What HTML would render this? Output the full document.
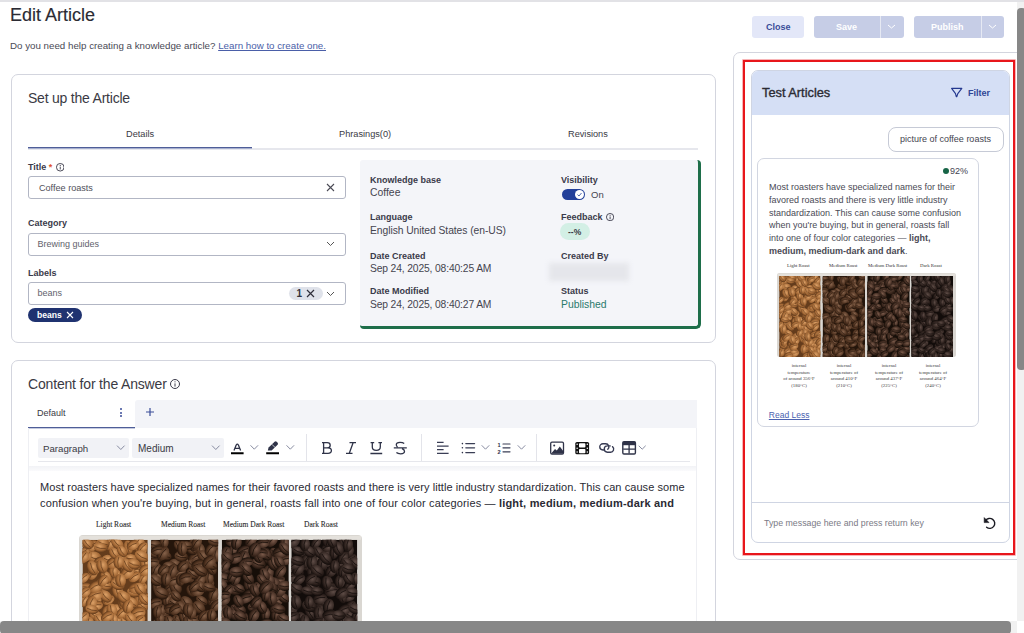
<!DOCTYPE html>
<html><head><meta charset="utf-8">
<style>
*{box-sizing:border-box;margin:0;padding:0}
html,body{width:1024px;height:633px;overflow:hidden;background:#fff;font-family:"Liberation Sans",sans-serif;color:#2f2f3a}
.a{position:absolute}
.t{position:absolute;white-space:nowrap;line-height:1}
.card{position:absolute;border:1px solid #d3d5de;border-radius:7px;background:#fff}
.lbl{font-weight:bold;font-size:9px;color:#3a3a4a}
.inp{position:absolute;border:1px solid #b2b6c4;border-radius:3px;background:#fff}
.btn{position:absolute;border-radius:3px}
</style></head><body>
<svg width="0" height="0" style="position:absolute"><symbol id="beans" viewBox="0 0 179 84"><defs><clipPath id="cp0"><rect x="2.2" y="3" width="41.3" height="81"/></clipPath><radialGradient id="bg0" cx="0.42" cy="0.38" r="0.62"><stop offset="0" stop-color="#dca066"/><stop offset="0.7" stop-color="#a06634"/><stop offset="1" stop-color="#643c1c"/></radialGradient><clipPath id="cp1"><rect x="45.6" y="3" width="42.4" height="81"/></clipPath><radialGradient id="bg1" cx="0.42" cy="0.38" r="0.62"><stop offset="0" stop-color="#86624a"/><stop offset="0.7" stop-color="#4c301e"/><stop offset="1" stop-color="#24150b"/></radialGradient><clipPath id="cp2"><rect x="90.3" y="3" width="42.4" height="81"/></clipPath><radialGradient id="bg2" cx="0.42" cy="0.38" r="0.62"><stop offset="0" stop-color="#7a5a4a"/><stop offset="0.7" stop-color="#3a261c"/><stop offset="1" stop-color="#160e08"/></radialGradient><clipPath id="cp3"><rect x="134.3" y="3" width="41.7" height="81"/></clipPath><radialGradient id="bg3" cx="0.42" cy="0.38" r="0.62"><stop offset="0" stop-color="#5e4c46"/><stop offset="0.7" stop-color="#2c201c"/><stop offset="1" stop-color="#120c0a"/></radialGradient></defs><rect x="0" y="0" width="179" height="84" rx="2.5" fill="#dad7d2"/><rect x="0.6" y="0.6" width="177.8" height="2.4" fill="#e4e1dc"/><g clip-path="url(#cp0)"><rect x="2.2" y="3" width="41.3" height="81" fill="#643c1c"/><g transform="translate(31.5 49.2) rotate(154)"><ellipse rx="4.8" ry="3.5" fill="url(#bg0)"/><path d="M-3.6 0Q0 1.2 3.6 0" fill="none" stroke="#643c1c" stroke-width="0.45"/></g><g transform="translate(21.0 5.0) rotate(146)"><ellipse rx="4.1" ry="3.1" fill="url(#bg0)"/><path d="M-3.1 0Q0 1.1 3.1 0" fill="none" stroke="#643c1c" stroke-width="0.45"/></g><g transform="translate(35.5 46.2) rotate(57)"><ellipse rx="4.8" ry="3.4" fill="url(#bg0)"/><path d="M-3.6 0Q0 1.2 3.6 0" fill="none" stroke="#643c1c" stroke-width="0.45"/></g><g transform="translate(3.7 33.2) rotate(180)"><ellipse rx="4.8" ry="3.3" fill="url(#bg0)"/><path d="M-3.6 0Q0 1.2 3.6 0" fill="none" stroke="#643c1c" stroke-width="0.45"/></g><g transform="translate(39.6 44.1) rotate(43)"><ellipse rx="4.8" ry="3.2" fill="url(#bg0)"/><path d="M-3.6 0Q0 1.1 3.6 0" fill="none" stroke="#643c1c" stroke-width="0.45"/></g><g transform="translate(30.9 57.4) rotate(17)"><ellipse rx="4.6" ry="3.2" fill="url(#bg0)"/><path d="M-3.5 0Q0 1.1 3.5 0" fill="none" stroke="#643c1c" stroke-width="0.45"/></g><g transform="translate(38.8 33.8) rotate(142)"><ellipse rx="4.7" ry="3.4" fill="url(#bg0)"/><path d="M-3.5 0Q0 1.2 3.5 0" fill="none" stroke="#643c1c" stroke-width="0.45"/></g><g transform="translate(8.5 24.7) rotate(123)"><ellipse rx="4.0" ry="2.9" fill="url(#bg0)"/><path d="M-3.0 0Q0 1.0 3.0 0" fill="none" stroke="#643c1c" stroke-width="0.45"/></g><g transform="translate(40.4 27.5) rotate(123)"><ellipse rx="3.9" ry="2.7" fill="url(#bg0)"/><path d="M-2.9 0Q0 0.9 2.9 0" fill="none" stroke="#643c1c" stroke-width="0.45"/></g><g transform="translate(24.4 47.6) rotate(21)"><ellipse rx="4.8" ry="3.7" fill="url(#bg0)"/><path d="M-3.6 0Q0 1.3 3.6 0" fill="none" stroke="#643c1c" stroke-width="0.45"/></g><g transform="translate(38.1 39.8) rotate(91)"><ellipse rx="4.4" ry="3.3" fill="url(#bg0)"/><path d="M-3.3 0Q0 1.2 3.3 0" fill="none" stroke="#643c1c" stroke-width="0.45"/></g><g transform="translate(34.9 36.1) rotate(13)"><ellipse rx="4.6" ry="3.1" fill="url(#bg0)"/><path d="M-3.4 0Q0 1.1 3.4 0" fill="none" stroke="#643c1c" stroke-width="0.45"/></g><g transform="translate(20.8 25.3) rotate(99)"><ellipse rx="4.0" ry="2.7" fill="url(#bg0)"/><path d="M-3.0 0Q0 0.9 3.0 0" fill="none" stroke="#643c1c" stroke-width="0.45"/></g><g transform="translate(10.9 51.1) rotate(26)"><ellipse rx="4.4" ry="3.2" fill="url(#bg0)"/><path d="M-3.3 0Q0 1.1 3.3 0" fill="none" stroke="#643c1c" stroke-width="0.45"/></g><g transform="translate(18.6 41.1) rotate(151)"><ellipse rx="4.1" ry="2.8" fill="url(#bg0)"/><path d="M-3.1 0Q0 1.0 3.1 0" fill="none" stroke="#643c1c" stroke-width="0.45"/></g><g transform="translate(9.6 14.1) rotate(17)"><ellipse rx="4.9" ry="3.8" fill="url(#bg0)"/><path d="M-3.7 0Q0 1.3 3.7 0" fill="none" stroke="#643c1c" stroke-width="0.45"/></g><g transform="translate(14.7 37.3) rotate(83)"><ellipse rx="4.0" ry="3.1" fill="url(#bg0)"/><path d="M-3.0 0Q0 1.1 3.0 0" fill="none" stroke="#643c1c" stroke-width="0.45"/></g><g transform="translate(5.3 78.6) rotate(84)"><ellipse rx="4.7" ry="3.3" fill="url(#bg0)"/><path d="M-3.5 0Q0 1.1 3.5 0" fill="none" stroke="#643c1c" stroke-width="0.45"/></g><g transform="translate(39.6 10.1) rotate(108)"><ellipse rx="4.4" ry="3.1" fill="url(#bg0)"/><path d="M-3.3 0Q0 1.1 3.3 0" fill="none" stroke="#643c1c" stroke-width="0.45"/></g><g transform="translate(42.8 39.7) rotate(152)"><ellipse rx="3.9" ry="2.9" fill="url(#bg0)"/><path d="M-2.9 0Q0 1.0 2.9 0" fill="none" stroke="#643c1c" stroke-width="0.45"/></g><g transform="translate(41.5 73.1) rotate(133)"><ellipse rx="4.1" ry="2.9" fill="url(#bg0)"/><path d="M-3.1 0Q0 1.0 3.1 0" fill="none" stroke="#643c1c" stroke-width="0.45"/></g><g transform="translate(38.8 35.0) rotate(30)"><ellipse rx="4.3" ry="2.9" fill="url(#bg0)"/><path d="M-3.2 0Q0 1.0 3.2 0" fill="none" stroke="#643c1c" stroke-width="0.45"/></g><g transform="translate(37.1 60.9) rotate(161)"><ellipse rx="4.4" ry="2.9" fill="url(#bg0)"/><path d="M-3.3 0Q0 1.0 3.3 0" fill="none" stroke="#643c1c" stroke-width="0.45"/></g><g transform="translate(17.6 80.4) rotate(155)"><ellipse rx="4.7" ry="3.5" fill="url(#bg0)"/><path d="M-3.5 0Q0 1.2 3.5 0" fill="none" stroke="#643c1c" stroke-width="0.45"/></g><g transform="translate(36.8 71.7) rotate(108)"><ellipse rx="4.5" ry="3.2" fill="url(#bg0)"/><path d="M-3.4 0Q0 1.1 3.4 0" fill="none" stroke="#643c1c" stroke-width="0.45"/></g><g transform="translate(8.0 6.8) rotate(145)"><ellipse rx="4.4" ry="3.4" fill="url(#bg0)"/><path d="M-3.3 0Q0 1.2 3.3 0" fill="none" stroke="#643c1c" stroke-width="0.45"/></g><g transform="translate(38.2 6.4) rotate(134)"><ellipse rx="4.2" ry="3.2" fill="url(#bg0)"/><path d="M-3.1 0Q0 1.1 3.1 0" fill="none" stroke="#643c1c" stroke-width="0.45"/></g><g transform="translate(42.2 18.3) rotate(73)"><ellipse rx="4.7" ry="3.5" fill="url(#bg0)"/><path d="M-3.5 0Q0 1.2 3.5 0" fill="none" stroke="#643c1c" stroke-width="0.45"/></g><g transform="translate(31.6 80.0) rotate(125)"><ellipse rx="4.8" ry="3.7" fill="url(#bg0)"/><path d="M-3.6 0Q0 1.3 3.6 0" fill="none" stroke="#643c1c" stroke-width="0.45"/></g><g transform="translate(24.5 35.8) rotate(73)"><ellipse rx="4.7" ry="3.5" fill="url(#bg0)"/><path d="M-3.5 0Q0 1.2 3.5 0" fill="none" stroke="#643c1c" stroke-width="0.45"/></g><g transform="translate(19.3 64.7) rotate(62)"><ellipse rx="4.6" ry="3.1" fill="url(#bg0)"/><path d="M-3.5 0Q0 1.1 3.5 0" fill="none" stroke="#643c1c" stroke-width="0.45"/></g><g transform="translate(28.2 56.1) rotate(64)"><ellipse rx="4.4" ry="2.9" fill="url(#bg0)"/><path d="M-3.3 0Q0 1.0 3.3 0" fill="none" stroke="#643c1c" stroke-width="0.45"/></g><g transform="translate(6.1 57.8) rotate(42)"><ellipse rx="4.5" ry="3.3" fill="url(#bg0)"/><path d="M-3.4 0Q0 1.2 3.4 0" fill="none" stroke="#643c1c" stroke-width="0.45"/></g><g transform="translate(2.6 41.2) rotate(61)"><ellipse rx="4.8" ry="3.6" fill="url(#bg0)"/><path d="M-3.6 0Q0 1.3 3.6 0" fill="none" stroke="#643c1c" stroke-width="0.45"/></g><g transform="translate(28.0 43.0) rotate(96)"><ellipse rx="4.6" ry="3.3" fill="url(#bg0)"/><path d="M-3.4 0Q0 1.2 3.4 0" fill="none" stroke="#643c1c" stroke-width="0.45"/></g><g transform="translate(19.5 5.6) rotate(116)"><ellipse rx="4.3" ry="3.3" fill="url(#bg0)"/><path d="M-3.2 0Q0 1.2 3.2 0" fill="none" stroke="#643c1c" stroke-width="0.45"/></g><g transform="translate(36.1 33.5) rotate(176)"><ellipse rx="4.6" ry="3.5" fill="url(#bg0)"/><path d="M-3.5 0Q0 1.2 3.5 0" fill="none" stroke="#643c1c" stroke-width="0.45"/></g><g transform="translate(10.9 41.7) rotate(133)"><ellipse rx="3.9" ry="2.9" fill="url(#bg0)"/><path d="M-2.9 0Q0 1.0 2.9 0" fill="none" stroke="#643c1c" stroke-width="0.45"/></g><g transform="translate(33.2 14.9) rotate(9)"><ellipse rx="4.2" ry="2.9" fill="url(#bg0)"/><path d="M-3.1 0Q0 1.0 3.1 0" fill="none" stroke="#643c1c" stroke-width="0.45"/></g><g transform="translate(15.2 5.1) rotate(18)"><ellipse rx="4.1" ry="2.9" fill="url(#bg0)"/><path d="M-3.1 0Q0 1.0 3.1 0" fill="none" stroke="#643c1c" stroke-width="0.45"/></g><g transform="translate(11.0 36.5) rotate(99)"><ellipse rx="4.2" ry="3.2" fill="url(#bg0)"/><path d="M-3.1 0Q0 1.1 3.1 0" fill="none" stroke="#643c1c" stroke-width="0.45"/></g><g transform="translate(17.8 49.1) rotate(102)"><ellipse rx="4.4" ry="3.4" fill="url(#bg0)"/><path d="M-3.3 0Q0 1.2 3.3 0" fill="none" stroke="#643c1c" stroke-width="0.45"/></g><g transform="translate(3.7 13.2) rotate(146)"><ellipse rx="4.9" ry="3.6" fill="url(#bg0)"/><path d="M-3.7 0Q0 1.3 3.7 0" fill="none" stroke="#643c1c" stroke-width="0.45"/></g><g transform="translate(3.1 11.0) rotate(137)"><ellipse rx="4.0" ry="2.9" fill="url(#bg0)"/><path d="M-3.0 0Q0 1.0 3.0 0" fill="none" stroke="#643c1c" stroke-width="0.45"/></g><g transform="translate(18.3 17.7) rotate(29)"><ellipse rx="3.9" ry="3.0" fill="url(#bg0)"/><path d="M-3.0 0Q0 1.1 3.0 0" fill="none" stroke="#643c1c" stroke-width="0.45"/></g><g transform="translate(23.8 26.0) rotate(89)"><ellipse rx="4.4" ry="3.0" fill="url(#bg0)"/><path d="M-3.3 0Q0 1.0 3.3 0" fill="none" stroke="#643c1c" stroke-width="0.45"/></g><g transform="translate(36.5 22.2) rotate(170)"><ellipse rx="4.5" ry="3.0" fill="url(#bg0)"/><path d="M-3.4 0Q0 1.1 3.4 0" fill="none" stroke="#643c1c" stroke-width="0.45"/></g><g transform="translate(29.3 22.8) rotate(108)"><ellipse rx="4.3" ry="3.1" fill="url(#bg0)"/><path d="M-3.2 0Q0 1.1 3.2 0" fill="none" stroke="#643c1c" stroke-width="0.45"/></g><g transform="translate(3.0 14.0) rotate(118)"><ellipse rx="4.3" ry="3.0" fill="url(#bg0)"/><path d="M-3.2 0Q0 1.0 3.2 0" fill="none" stroke="#643c1c" stroke-width="0.45"/></g><g transform="translate(13.4 31.0) rotate(129)"><ellipse rx="4.5" ry="3.1" fill="url(#bg0)"/><path d="M-3.3 0Q0 1.1 3.3 0" fill="none" stroke="#643c1c" stroke-width="0.45"/></g><g transform="translate(29.1 19.6) rotate(44)"><ellipse rx="4.2" ry="2.8" fill="url(#bg0)"/><path d="M-3.1 0Q0 1.0 3.1 0" fill="none" stroke="#643c1c" stroke-width="0.45"/></g><g transform="translate(3.1 27.1) rotate(136)"><ellipse rx="3.9" ry="2.7" fill="url(#bg0)"/><path d="M-3.0 0Q0 0.9 3.0 0" fill="none" stroke="#643c1c" stroke-width="0.45"/></g><g transform="translate(40.7 61.5) rotate(135)"><ellipse rx="4.3" ry="3.3" fill="url(#bg0)"/><path d="M-3.2 0Q0 1.2 3.2 0" fill="none" stroke="#643c1c" stroke-width="0.45"/></g><g transform="translate(13.6 16.7) rotate(170)"><ellipse rx="4.0" ry="3.1" fill="url(#bg0)"/><path d="M-3.0 0Q0 1.1 3.0 0" fill="none" stroke="#643c1c" stroke-width="0.45"/></g><g transform="translate(27.5 59.6) rotate(77)"><ellipse rx="4.0" ry="3.1" fill="url(#bg0)"/><path d="M-3.0 0Q0 1.1 3.0 0" fill="none" stroke="#643c1c" stroke-width="0.45"/></g><g transform="translate(6.4 72.3) rotate(44)"><ellipse rx="4.4" ry="3.4" fill="url(#bg0)"/><path d="M-3.3 0Q0 1.2 3.3 0" fill="none" stroke="#643c1c" stroke-width="0.45"/></g><g transform="translate(41.5 65.4) rotate(130)"><ellipse rx="4.4" ry="3.4" fill="url(#bg0)"/><path d="M-3.3 0Q0 1.2 3.3 0" fill="none" stroke="#643c1c" stroke-width="0.45"/></g><g transform="translate(41.8 22.3) rotate(147)"><ellipse rx="4.4" ry="3.4" fill="url(#bg0)"/><path d="M-3.3 0Q0 1.2 3.3 0" fill="none" stroke="#643c1c" stroke-width="0.45"/></g><g transform="translate(7.1 69.1) rotate(112)"><ellipse rx="4.5" ry="3.0" fill="url(#bg0)"/><path d="M-3.4 0Q0 1.1 3.4 0" fill="none" stroke="#643c1c" stroke-width="0.45"/></g><g transform="translate(5.3 5.6) rotate(9)"><ellipse rx="4.4" ry="3.0" fill="url(#bg0)"/><path d="M-3.3 0Q0 1.0 3.3 0" fill="none" stroke="#643c1c" stroke-width="0.45"/></g><g transform="translate(31.1 7.8) rotate(80)"><ellipse rx="4.4" ry="3.0" fill="url(#bg0)"/><path d="M-3.3 0Q0 1.0 3.3 0" fill="none" stroke="#643c1c" stroke-width="0.45"/></g><g transform="translate(16.9 38.7) rotate(47)"><ellipse rx="4.6" ry="3.3" fill="url(#bg0)"/><path d="M-3.4 0Q0 1.1 3.4 0" fill="none" stroke="#643c1c" stroke-width="0.45"/></g><g transform="translate(7.6 39.7) rotate(140)"><ellipse rx="4.5" ry="3.2" fill="url(#bg0)"/><path d="M-3.4 0Q0 1.1 3.4 0" fill="none" stroke="#643c1c" stroke-width="0.45"/></g><g transform="translate(38.5 67.5) rotate(171)"><ellipse rx="4.4" ry="3.5" fill="url(#bg0)"/><path d="M-3.3 0Q0 1.2 3.3 0" fill="none" stroke="#643c1c" stroke-width="0.45"/></g><g transform="translate(26.4 14.8) rotate(20)"><ellipse rx="4.6" ry="3.2" fill="url(#bg0)"/><path d="M-3.5 0Q0 1.1 3.5 0" fill="none" stroke="#643c1c" stroke-width="0.45"/></g><g transform="translate(29.1 41.2) rotate(112)"><ellipse rx="4.8" ry="3.6" fill="url(#bg0)"/><path d="M-3.6 0Q0 1.3 3.6 0" fill="none" stroke="#643c1c" stroke-width="0.45"/></g><g transform="translate(13.0 73.2) rotate(123)"><ellipse rx="4.3" ry="2.9" fill="url(#bg0)"/><path d="M-3.2 0Q0 1.0 3.2 0" fill="none" stroke="#643c1c" stroke-width="0.45"/></g><g transform="translate(37.5 4.5) rotate(114)"><ellipse rx="4.5" ry="3.3" fill="url(#bg0)"/><path d="M-3.3 0Q0 1.1 3.3 0" fill="none" stroke="#643c1c" stroke-width="0.45"/></g><g transform="translate(24.3 5.3) rotate(45)"><ellipse rx="4.7" ry="3.2" fill="url(#bg0)"/><path d="M-3.5 0Q0 1.1 3.5 0" fill="none" stroke="#643c1c" stroke-width="0.45"/></g><g transform="translate(10.4 37.9) rotate(158)"><ellipse rx="4.9" ry="3.8" fill="url(#bg0)"/><path d="M-3.7 0Q0 1.3 3.7 0" fill="none" stroke="#643c1c" stroke-width="0.45"/></g><g transform="translate(5.3 5.5) rotate(49)"><ellipse rx="3.9" ry="2.6" fill="url(#bg0)"/><path d="M-3.0 0Q0 0.9 3.0 0" fill="none" stroke="#643c1c" stroke-width="0.45"/></g><g transform="translate(31.2 51.1) rotate(18)"><ellipse rx="4.3" ry="3.2" fill="url(#bg0)"/><path d="M-3.2 0Q0 1.1 3.2 0" fill="none" stroke="#643c1c" stroke-width="0.45"/></g><g transform="translate(19.0 15.6) rotate(16)"><ellipse rx="4.4" ry="3.0" fill="url(#bg0)"/><path d="M-3.3 0Q0 1.0 3.3 0" fill="none" stroke="#643c1c" stroke-width="0.45"/></g><g transform="translate(15.2 71.0) rotate(114)"><ellipse rx="4.6" ry="3.3" fill="url(#bg0)"/><path d="M-3.4 0Q0 1.2 3.4 0" fill="none" stroke="#643c1c" stroke-width="0.45"/></g><g transform="translate(33.6 42.7) rotate(38)"><ellipse rx="4.3" ry="3.1" fill="url(#bg0)"/><path d="M-3.2 0Q0 1.1 3.2 0" fill="none" stroke="#643c1c" stroke-width="0.45"/></g><g transform="translate(9.4 22.1) rotate(151)"><ellipse rx="4.2" ry="3.2" fill="url(#bg0)"/><path d="M-3.2 0Q0 1.1 3.2 0" fill="none" stroke="#643c1c" stroke-width="0.45"/></g><g transform="translate(28.8 82.4) rotate(146)"><ellipse rx="4.0" ry="2.7" fill="url(#bg0)"/><path d="M-3.0 0Q0 0.9 3.0 0" fill="none" stroke="#643c1c" stroke-width="0.45"/></g><g transform="translate(11.7 60.8) rotate(38)"><ellipse rx="4.5" ry="3.4" fill="url(#bg0)"/><path d="M-3.4 0Q0 1.2 3.4 0" fill="none" stroke="#643c1c" stroke-width="0.45"/></g><g transform="translate(35.0 26.4) rotate(146)"><ellipse rx="4.3" ry="3.0" fill="url(#bg0)"/><path d="M-3.2 0Q0 1.0 3.2 0" fill="none" stroke="#643c1c" stroke-width="0.45"/></g><g transform="translate(16.5 77.7) rotate(178)"><ellipse rx="4.3" ry="3.2" fill="url(#bg0)"/><path d="M-3.2 0Q0 1.1 3.2 0" fill="none" stroke="#643c1c" stroke-width="0.45"/></g><g transform="translate(23.3 53.8) rotate(134)"><ellipse rx="4.2" ry="3.1" fill="url(#bg0)"/><path d="M-3.2 0Q0 1.1 3.2 0" fill="none" stroke="#643c1c" stroke-width="0.45"/></g><g transform="translate(8.7 20.8) rotate(66)"><ellipse rx="4.8" ry="3.4" fill="url(#bg0)"/><path d="M-3.6 0Q0 1.2 3.6 0" fill="none" stroke="#643c1c" stroke-width="0.45"/></g><g transform="translate(17.0 31.9) rotate(14)"><ellipse rx="4.0" ry="3.1" fill="url(#bg0)"/><path d="M-3.0 0Q0 1.1 3.0 0" fill="none" stroke="#643c1c" stroke-width="0.45"/></g><g transform="translate(21.9 23.1) rotate(87)"><ellipse rx="4.0" ry="2.9" fill="url(#bg0)"/><path d="M-3.0 0Q0 1.0 3.0 0" fill="none" stroke="#643c1c" stroke-width="0.45"/></g><g transform="translate(6.9 65.6) rotate(140)"><ellipse rx="4.6" ry="3.2" fill="url(#bg0)"/><path d="M-3.4 0Q0 1.1 3.4 0" fill="none" stroke="#643c1c" stroke-width="0.45"/></g><g transform="translate(3.1 41.6) rotate(119)"><ellipse rx="4.0" ry="2.7" fill="url(#bg0)"/><path d="M-3.0 0Q0 1.0 3.0 0" fill="none" stroke="#643c1c" stroke-width="0.45"/></g><g transform="translate(14.3 69.9) rotate(130)"><ellipse rx="4.0" ry="2.8" fill="url(#bg0)"/><path d="M-3.0 0Q0 1.0 3.0 0" fill="none" stroke="#643c1c" stroke-width="0.45"/></g><g transform="translate(24.5 31.3) rotate(26)"><ellipse rx="4.6" ry="3.2" fill="url(#bg0)"/><path d="M-3.4 0Q0 1.1 3.4 0" fill="none" stroke="#643c1c" stroke-width="0.45"/></g><g transform="translate(17.0 26.7) rotate(66)"><ellipse rx="4.3" ry="3.2" fill="url(#bg0)"/><path d="M-3.2 0Q0 1.1 3.2 0" fill="none" stroke="#643c1c" stroke-width="0.45"/></g><g transform="translate(34.6 72.3) rotate(102)"><ellipse rx="4.0" ry="3.0" fill="url(#bg0)"/><path d="M-3.0 0Q0 1.0 3.0 0" fill="none" stroke="#643c1c" stroke-width="0.45"/></g><g transform="translate(37.4 49.2) rotate(164)"><ellipse rx="4.8" ry="3.7" fill="url(#bg0)"/><path d="M-3.6 0Q0 1.3 3.6 0" fill="none" stroke="#643c1c" stroke-width="0.45"/></g><g transform="translate(38.6 34.1) rotate(55)"><ellipse rx="4.3" ry="3.3" fill="url(#bg0)"/><path d="M-3.3 0Q0 1.1 3.3 0" fill="none" stroke="#643c1c" stroke-width="0.45"/></g><g transform="translate(31.7 17.5) rotate(168)"><ellipse rx="4.2" ry="3.0" fill="url(#bg0)"/><path d="M-3.2 0Q0 1.0 3.2 0" fill="none" stroke="#643c1c" stroke-width="0.45"/></g><g transform="translate(25.2 65.8) rotate(65)"><ellipse rx="4.8" ry="3.3" fill="url(#bg0)"/><path d="M-3.6 0Q0 1.2 3.6 0" fill="none" stroke="#643c1c" stroke-width="0.45"/></g><g transform="translate(40.8 79.0) rotate(71)"><ellipse rx="4.3" ry="3.0" fill="url(#bg0)"/><path d="M-3.2 0Q0 1.1 3.2 0" fill="none" stroke="#643c1c" stroke-width="0.45"/></g><g transform="translate(29.3 74.3) rotate(101)"><ellipse rx="4.3" ry="2.9" fill="url(#bg0)"/><path d="M-3.2 0Q0 1.0 3.2 0" fill="none" stroke="#643c1c" stroke-width="0.45"/></g><g transform="translate(10.2 32.8) rotate(151)"><ellipse rx="4.7" ry="3.4" fill="url(#bg0)"/><path d="M-3.5 0Q0 1.2 3.5 0" fill="none" stroke="#643c1c" stroke-width="0.45"/></g><g transform="translate(38.1 54.2) rotate(137)"><ellipse rx="4.5" ry="3.0" fill="url(#bg0)"/><path d="M-3.3 0Q0 1.1 3.3 0" fill="none" stroke="#643c1c" stroke-width="0.45"/></g><g transform="translate(18.5 67.1) rotate(4)"><ellipse rx="4.8" ry="3.3" fill="url(#bg0)"/><path d="M-3.6 0Q0 1.2 3.6 0" fill="none" stroke="#643c1c" stroke-width="0.45"/></g><g transform="translate(32.8 83.3) rotate(102)"><ellipse rx="4.4" ry="3.2" fill="url(#bg0)"/><path d="M-3.3 0Q0 1.1 3.3 0" fill="none" stroke="#643c1c" stroke-width="0.45"/></g><g transform="translate(30.5 23.8) rotate(145)"><ellipse rx="4.9" ry="3.6" fill="url(#bg0)"/><path d="M-3.6 0Q0 1.3 3.6 0" fill="none" stroke="#643c1c" stroke-width="0.45"/></g><g transform="translate(9.9 78.3) rotate(142)"><ellipse rx="4.0" ry="2.9" fill="url(#bg0)"/><path d="M-3.0 0Q0 1.0 3.0 0" fill="none" stroke="#643c1c" stroke-width="0.45"/></g><g transform="translate(40.2 8.0) rotate(133)"><ellipse rx="4.0" ry="2.7" fill="url(#bg0)"/><path d="M-3.0 0Q0 0.9 3.0 0" fill="none" stroke="#643c1c" stroke-width="0.45"/></g><g transform="translate(35.5 77.1) rotate(114)"><ellipse rx="4.8" ry="3.2" fill="url(#bg0)"/><path d="M-3.6 0Q0 1.1 3.6 0" fill="none" stroke="#643c1c" stroke-width="0.45"/></g><g transform="translate(22.4 59.9) rotate(117)"><ellipse rx="4.0" ry="3.0" fill="url(#bg0)"/><path d="M-3.0 0Q0 1.1 3.0 0" fill="none" stroke="#643c1c" stroke-width="0.45"/></g><g transform="translate(26.9 49.4) rotate(138)"><ellipse rx="4.1" ry="2.8" fill="url(#bg0)"/><path d="M-3.1 0Q0 1.0 3.1 0" fill="none" stroke="#643c1c" stroke-width="0.45"/></g><g transform="translate(20.9 47.5) rotate(71)"><ellipse rx="4.4" ry="3.3" fill="url(#bg0)"/><path d="M-3.3 0Q0 1.2 3.3 0" fill="none" stroke="#643c1c" stroke-width="0.45"/></g><g transform="translate(32.7 69.4) rotate(121)"><ellipse rx="4.2" ry="3.3" fill="url(#bg0)"/><path d="M-3.2 0Q0 1.2 3.2 0" fill="none" stroke="#643c1c" stroke-width="0.45"/></g><g transform="translate(18.5 69.0) rotate(130)"><ellipse rx="4.4" ry="3.2" fill="url(#bg0)"/><path d="M-3.3 0Q0 1.1 3.3 0" fill="none" stroke="#643c1c" stroke-width="0.45"/></g><g transform="translate(35.5 80.6) rotate(74)"><ellipse rx="4.6" ry="3.5" fill="url(#bg0)"/><path d="M-3.5 0Q0 1.2 3.5 0" fill="none" stroke="#643c1c" stroke-width="0.45"/></g><g transform="translate(21.8 17.5) rotate(154)"><ellipse rx="4.7" ry="3.5" fill="url(#bg0)"/><path d="M-3.5 0Q0 1.2 3.5 0" fill="none" stroke="#643c1c" stroke-width="0.45"/></g><g transform="translate(16.8 73.3) rotate(160)"><ellipse rx="4.7" ry="3.6" fill="url(#bg0)"/><path d="M-3.5 0Q0 1.3 3.5 0" fill="none" stroke="#643c1c" stroke-width="0.45"/></g><g transform="translate(6.0 56.2) rotate(94)"><ellipse rx="4.9" ry="3.6" fill="url(#bg0)"/><path d="M-3.6 0Q0 1.3 3.6 0" fill="none" stroke="#643c1c" stroke-width="0.45"/></g><g transform="translate(14.6 19.6) rotate(76)"><ellipse rx="4.6" ry="3.5" fill="url(#bg0)"/><path d="M-3.5 0Q0 1.2 3.5 0" fill="none" stroke="#643c1c" stroke-width="0.45"/></g><g transform="translate(2.8 52.1) rotate(133)"><ellipse rx="4.3" ry="2.9" fill="url(#bg0)"/><path d="M-3.2 0Q0 1.0 3.2 0" fill="none" stroke="#643c1c" stroke-width="0.45"/></g><g transform="translate(39.8 13.4) rotate(30)"><ellipse rx="4.9" ry="3.4" fill="url(#bg0)"/><path d="M-3.7 0Q0 1.2 3.7 0" fill="none" stroke="#643c1c" stroke-width="0.45"/></g><g transform="translate(34.4 77.2) rotate(53)"><ellipse rx="4.1" ry="2.9" fill="url(#bg0)"/><path d="M-3.1 0Q0 1.0 3.1 0" fill="none" stroke="#643c1c" stroke-width="0.45"/></g><g transform="translate(30.5 19.1) rotate(56)"><ellipse rx="4.9" ry="3.2" fill="url(#bg0)"/><path d="M-3.7 0Q0 1.1 3.7 0" fill="none" stroke="#643c1c" stroke-width="0.45"/></g><g transform="translate(3.8 36.3) rotate(140)"><ellipse rx="4.0" ry="3.0" fill="url(#bg0)"/><path d="M-3.0 0Q0 1.0 3.0 0" fill="none" stroke="#643c1c" stroke-width="0.45"/></g><g transform="translate(22.0 53.6) rotate(83)"><ellipse rx="4.1" ry="2.7" fill="url(#bg0)"/><path d="M-3.1 0Q0 1.0 3.1 0" fill="none" stroke="#643c1c" stroke-width="0.45"/></g><g transform="translate(28.0 76.7) rotate(7)"><ellipse rx="4.5" ry="3.4" fill="url(#bg0)"/><path d="M-3.4 0Q0 1.2 3.4 0" fill="none" stroke="#643c1c" stroke-width="0.45"/></g><g transform="translate(27.6 64.3) rotate(39)"><ellipse rx="4.0" ry="2.7" fill="url(#bg0)"/><path d="M-3.0 0Q0 1.0 3.0 0" fill="none" stroke="#643c1c" stroke-width="0.45"/></g><g transform="translate(4.1 79.8) rotate(107)"><ellipse rx="4.1" ry="3.1" fill="url(#bg0)"/><path d="M-3.1 0Q0 1.1 3.1 0" fill="none" stroke="#643c1c" stroke-width="0.45"/></g><g transform="translate(41.2 40.6) rotate(51)"><ellipse rx="4.1" ry="2.8" fill="url(#bg0)"/><path d="M-3.1 0Q0 1.0 3.1 0" fill="none" stroke="#643c1c" stroke-width="0.45"/></g><g transform="translate(22.4 11.6) rotate(56)"><ellipse rx="4.1" ry="3.1" fill="url(#bg0)"/><path d="M-3.1 0Q0 1.1 3.1 0" fill="none" stroke="#643c1c" stroke-width="0.45"/></g><g transform="translate(26.3 28.6) rotate(86)"><ellipse rx="4.4" ry="3.4" fill="url(#bg0)"/><path d="M-3.3 0Q0 1.2 3.3 0" fill="none" stroke="#643c1c" stroke-width="0.45"/></g><g transform="translate(11.3 82.5) rotate(165)"><ellipse rx="4.2" ry="3.2" fill="url(#bg0)"/><path d="M-3.1 0Q0 1.1 3.1 0" fill="none" stroke="#643c1c" stroke-width="0.45"/></g><g transform="translate(11.0 44.5) rotate(172)"><ellipse rx="4.2" ry="3.1" fill="url(#bg0)"/><path d="M-3.2 0Q0 1.1 3.2 0" fill="none" stroke="#643c1c" stroke-width="0.45"/></g><g transform="translate(13.7 7.9) rotate(9)"><ellipse rx="4.4" ry="3.0" fill="url(#bg0)"/><path d="M-3.3 0Q0 1.1 3.3 0" fill="none" stroke="#643c1c" stroke-width="0.45"/></g><g transform="translate(15.0 67.1) rotate(69)"><ellipse rx="4.8" ry="3.7" fill="url(#bg0)"/><path d="M-3.6 0Q0 1.3 3.6 0" fill="none" stroke="#643c1c" stroke-width="0.45"/></g><g transform="translate(32.8 53.0) rotate(49)"><ellipse rx="4.4" ry="3.2" fill="url(#bg0)"/><path d="M-3.3 0Q0 1.1 3.3 0" fill="none" stroke="#643c1c" stroke-width="0.45"/></g><g transform="translate(39.0 82.4) rotate(43)"><ellipse rx="4.9" ry="3.6" fill="url(#bg0)"/><path d="M-3.7 0Q0 1.3 3.7 0" fill="none" stroke="#643c1c" stroke-width="0.45"/></g><g transform="translate(28.8 69.8) rotate(67)"><ellipse rx="3.9" ry="2.8" fill="url(#bg0)"/><path d="M-2.9 0Q0 1.0 2.9 0" fill="none" stroke="#643c1c" stroke-width="0.45"/></g><g transform="translate(7.8 43.2) rotate(109)"><ellipse rx="4.7" ry="3.5" fill="url(#bg0)"/><path d="M-3.5 0Q0 1.2 3.5 0" fill="none" stroke="#643c1c" stroke-width="0.45"/></g><g transform="translate(27.2 10.2) rotate(58)"><ellipse rx="4.1" ry="2.8" fill="url(#bg0)"/><path d="M-3.0 0Q0 1.0 3.0 0" fill="none" stroke="#643c1c" stroke-width="0.45"/></g><g transform="translate(25.0 17.0) rotate(93)"><ellipse rx="4.2" ry="3.2" fill="url(#bg0)"/><path d="M-3.1 0Q0 1.1 3.1 0" fill="none" stroke="#643c1c" stroke-width="0.45"/></g><g transform="translate(28.2 39.2) rotate(48)"><ellipse rx="4.5" ry="3.5" fill="url(#bg0)"/><path d="M-3.4 0Q0 1.2 3.4 0" fill="none" stroke="#643c1c" stroke-width="0.45"/></g><g transform="translate(42.3 68.5) rotate(139)"><ellipse rx="4.4" ry="3.0" fill="url(#bg0)"/><path d="M-3.3 0Q0 1.1 3.3 0" fill="none" stroke="#643c1c" stroke-width="0.45"/></g><g transform="translate(34.0 6.4) rotate(152)"><ellipse rx="3.9" ry="3.0" fill="url(#bg0)"/><path d="M-2.9 0Q0 1.0 2.9 0" fill="none" stroke="#643c1c" stroke-width="0.45"/></g><g transform="translate(13.2 53.9) rotate(49)"><ellipse rx="4.7" ry="3.2" fill="url(#bg0)"/><path d="M-3.5 0Q0 1.1 3.5 0" fill="none" stroke="#643c1c" stroke-width="0.45"/></g><g transform="translate(30.5 63.9) rotate(86)"><ellipse rx="4.6" ry="3.1" fill="url(#bg0)"/><path d="M-3.5 0Q0 1.1 3.5 0" fill="none" stroke="#643c1c" stroke-width="0.45"/></g><g transform="translate(31.0 45.2) rotate(106)"><ellipse rx="4.4" ry="3.4" fill="url(#bg0)"/><path d="M-3.3 0Q0 1.2 3.3 0" fill="none" stroke="#643c1c" stroke-width="0.45"/></g><g transform="translate(9.6 64.3) rotate(142)"><ellipse rx="4.8" ry="3.3" fill="url(#bg0)"/><path d="M-3.6 0Q0 1.2 3.6 0" fill="none" stroke="#643c1c" stroke-width="0.45"/></g><g transform="translate(34.8 18.3) rotate(16)"><ellipse rx="4.3" ry="3.3" fill="url(#bg0)"/><path d="M-3.2 0Q0 1.2 3.2 0" fill="none" stroke="#643c1c" stroke-width="0.45"/></g><g transform="translate(26.2 76.2) rotate(98)"><ellipse rx="4.7" ry="3.2" fill="url(#bg0)"/><path d="M-3.5 0Q0 1.1 3.5 0" fill="none" stroke="#643c1c" stroke-width="0.45"/></g><g transform="translate(17.9 51.6) rotate(150)"><ellipse rx="4.4" ry="3.0" fill="url(#bg0)"/><path d="M-3.3 0Q0 1.1 3.3 0" fill="none" stroke="#643c1c" stroke-width="0.45"/></g><g transform="translate(8.2 47.0) rotate(14)"><ellipse rx="4.2" ry="2.9" fill="url(#bg0)"/><path d="M-3.2 0Q0 1.0 3.2 0" fill="none" stroke="#643c1c" stroke-width="0.45"/></g><g transform="translate(15.4 28.8) rotate(129)"><ellipse rx="4.2" ry="3.0" fill="url(#bg0)"/><path d="M-3.2 0Q0 1.1 3.2 0" fill="none" stroke="#643c1c" stroke-width="0.45"/></g></g><g clip-path="url(#cp1)"><rect x="45.6" y="3" width="42.4" height="81" fill="#24150b"/><g transform="translate(57.6 38.1) rotate(137)"><ellipse rx="4.3" ry="3.1" fill="url(#bg1)"/><path d="M-3.2 0Q0 1.1 3.2 0" fill="none" stroke="#24150b" stroke-width="0.45"/></g><g transform="translate(71.0 26.0) rotate(113)"><ellipse rx="4.4" ry="3.1" fill="url(#bg1)"/><path d="M-3.3 0Q0 1.1 3.3 0" fill="none" stroke="#24150b" stroke-width="0.45"/></g><g transform="translate(61.0 54.3) rotate(97)"><ellipse rx="4.1" ry="2.9" fill="url(#bg1)"/><path d="M-3.1 0Q0 1.0 3.1 0" fill="none" stroke="#24150b" stroke-width="0.45"/></g><g transform="translate(65.6 16.9) rotate(50)"><ellipse rx="4.3" ry="2.9" fill="url(#bg1)"/><path d="M-3.2 0Q0 1.0 3.2 0" fill="none" stroke="#24150b" stroke-width="0.45"/></g><g transform="translate(86.5 12.6) rotate(93)"><ellipse rx="4.8" ry="3.6" fill="url(#bg1)"/><path d="M-3.6 0Q0 1.2 3.6 0" fill="none" stroke="#24150b" stroke-width="0.45"/></g><g transform="translate(48.0 66.4) rotate(102)"><ellipse rx="4.6" ry="3.3" fill="url(#bg1)"/><path d="M-3.5 0Q0 1.2 3.5 0" fill="none" stroke="#24150b" stroke-width="0.45"/></g><g transform="translate(77.5 53.8) rotate(19)"><ellipse rx="4.5" ry="3.1" fill="url(#bg1)"/><path d="M-3.4 0Q0 1.1 3.4 0" fill="none" stroke="#24150b" stroke-width="0.45"/></g><g transform="translate(87.1 74.6) rotate(140)"><ellipse rx="4.0" ry="3.0" fill="url(#bg1)"/><path d="M-3.0 0Q0 1.0 3.0 0" fill="none" stroke="#24150b" stroke-width="0.45"/></g><g transform="translate(76.4 28.4) rotate(151)"><ellipse rx="4.0" ry="2.8" fill="url(#bg1)"/><path d="M-3.0 0Q0 1.0 3.0 0" fill="none" stroke="#24150b" stroke-width="0.45"/></g><g transform="translate(50.2 78.7) rotate(151)"><ellipse rx="4.0" ry="3.1" fill="url(#bg1)"/><path d="M-3.0 0Q0 1.1 3.0 0" fill="none" stroke="#24150b" stroke-width="0.45"/></g><g transform="translate(49.3 26.1) rotate(69)"><ellipse rx="4.3" ry="3.3" fill="url(#bg1)"/><path d="M-3.3 0Q0 1.2 3.3 0" fill="none" stroke="#24150b" stroke-width="0.45"/></g><g transform="translate(48.5 21.5) rotate(120)"><ellipse rx="4.2" ry="3.2" fill="url(#bg1)"/><path d="M-3.1 0Q0 1.1 3.1 0" fill="none" stroke="#24150b" stroke-width="0.45"/></g><g transform="translate(58.7 43.4) rotate(88)"><ellipse rx="4.2" ry="3.1" fill="url(#bg1)"/><path d="M-3.2 0Q0 1.1 3.2 0" fill="none" stroke="#24150b" stroke-width="0.45"/></g><g transform="translate(54.7 13.0) rotate(23)"><ellipse rx="4.1" ry="2.9" fill="url(#bg1)"/><path d="M-3.1 0Q0 1.0 3.1 0" fill="none" stroke="#24150b" stroke-width="0.45"/></g><g transform="translate(49.2 33.4) rotate(86)"><ellipse rx="4.1" ry="2.9" fill="url(#bg1)"/><path d="M-3.1 0Q0 1.0 3.1 0" fill="none" stroke="#24150b" stroke-width="0.45"/></g><g transform="translate(49.0 65.8) rotate(99)"><ellipse rx="4.6" ry="3.3" fill="url(#bg1)"/><path d="M-3.4 0Q0 1.2 3.4 0" fill="none" stroke="#24150b" stroke-width="0.45"/></g><g transform="translate(55.3 27.4) rotate(68)"><ellipse rx="4.2" ry="3.0" fill="url(#bg1)"/><path d="M-3.2 0Q0 1.1 3.2 0" fill="none" stroke="#24150b" stroke-width="0.45"/></g><g transform="translate(70.8 78.9) rotate(96)"><ellipse rx="4.8" ry="3.6" fill="url(#bg1)"/><path d="M-3.6 0Q0 1.3 3.6 0" fill="none" stroke="#24150b" stroke-width="0.45"/></g><g transform="translate(55.3 41.1) rotate(93)"><ellipse rx="4.3" ry="2.9" fill="url(#bg1)"/><path d="M-3.3 0Q0 1.0 3.3 0" fill="none" stroke="#24150b" stroke-width="0.45"/></g><g transform="translate(82.9 83.6) rotate(67)"><ellipse rx="4.3" ry="2.9" fill="url(#bg1)"/><path d="M-3.2 0Q0 1.0 3.2 0" fill="none" stroke="#24150b" stroke-width="0.45"/></g><g transform="translate(58.3 32.7) rotate(153)"><ellipse rx="4.5" ry="3.1" fill="url(#bg1)"/><path d="M-3.4 0Q0 1.1 3.4 0" fill="none" stroke="#24150b" stroke-width="0.45"/></g><g transform="translate(48.4 14.9) rotate(2)"><ellipse rx="4.6" ry="3.3" fill="url(#bg1)"/><path d="M-3.5 0Q0 1.2 3.5 0" fill="none" stroke="#24150b" stroke-width="0.45"/></g><g transform="translate(66.8 17.6) rotate(119)"><ellipse rx="4.7" ry="3.5" fill="url(#bg1)"/><path d="M-3.5 0Q0 1.2 3.5 0" fill="none" stroke="#24150b" stroke-width="0.45"/></g><g transform="translate(53.7 4.8) rotate(100)"><ellipse rx="4.0" ry="3.0" fill="url(#bg1)"/><path d="M-3.0 0Q0 1.1 3.0 0" fill="none" stroke="#24150b" stroke-width="0.45"/></g><g transform="translate(49.2 72.3) rotate(139)"><ellipse rx="4.3" ry="2.9" fill="url(#bg1)"/><path d="M-3.2 0Q0 1.0 3.2 0" fill="none" stroke="#24150b" stroke-width="0.45"/></g><g transform="translate(56.2 68.1) rotate(47)"><ellipse rx="4.3" ry="3.2" fill="url(#bg1)"/><path d="M-3.2 0Q0 1.1 3.2 0" fill="none" stroke="#24150b" stroke-width="0.45"/></g><g transform="translate(76.6 9.9) rotate(89)"><ellipse rx="4.7" ry="3.2" fill="url(#bg1)"/><path d="M-3.5 0Q0 1.1 3.5 0" fill="none" stroke="#24150b" stroke-width="0.45"/></g><g transform="translate(53.2 49.0) rotate(51)"><ellipse rx="4.4" ry="3.4" fill="url(#bg1)"/><path d="M-3.3 0Q0 1.2 3.3 0" fill="none" stroke="#24150b" stroke-width="0.45"/></g><g transform="translate(62.7 63.5) rotate(167)"><ellipse rx="4.6" ry="3.2" fill="url(#bg1)"/><path d="M-3.5 0Q0 1.1 3.5 0" fill="none" stroke="#24150b" stroke-width="0.45"/></g><g transform="translate(71.1 35.5) rotate(63)"><ellipse rx="4.1" ry="3.1" fill="url(#bg1)"/><path d="M-3.1 0Q0 1.1 3.1 0" fill="none" stroke="#24150b" stroke-width="0.45"/></g><g transform="translate(61.9 78.3) rotate(134)"><ellipse rx="4.6" ry="3.3" fill="url(#bg1)"/><path d="M-3.5 0Q0 1.2 3.5 0" fill="none" stroke="#24150b" stroke-width="0.45"/></g><g transform="translate(78.0 66.5) rotate(86)"><ellipse rx="4.8" ry="3.6" fill="url(#bg1)"/><path d="M-3.6 0Q0 1.3 3.6 0" fill="none" stroke="#24150b" stroke-width="0.45"/></g><g transform="translate(76.7 81.2) rotate(56)"><ellipse rx="4.2" ry="3.2" fill="url(#bg1)"/><path d="M-3.1 0Q0 1.1 3.1 0" fill="none" stroke="#24150b" stroke-width="0.45"/></g><g transform="translate(60.9 43.2) rotate(22)"><ellipse rx="4.8" ry="3.7" fill="url(#bg1)"/><path d="M-3.6 0Q0 1.3 3.6 0" fill="none" stroke="#24150b" stroke-width="0.45"/></g><g transform="translate(68.0 42.9) rotate(49)"><ellipse rx="4.8" ry="3.7" fill="url(#bg1)"/><path d="M-3.6 0Q0 1.3 3.6 0" fill="none" stroke="#24150b" stroke-width="0.45"/></g><g transform="translate(84.9 54.1) rotate(54)"><ellipse rx="4.3" ry="3.3" fill="url(#bg1)"/><path d="M-3.2 0Q0 1.1 3.2 0" fill="none" stroke="#24150b" stroke-width="0.45"/></g><g transform="translate(85.0 79.9) rotate(13)"><ellipse rx="4.6" ry="3.5" fill="url(#bg1)"/><path d="M-3.5 0Q0 1.2 3.5 0" fill="none" stroke="#24150b" stroke-width="0.45"/></g><g transform="translate(75.8 13.9) rotate(67)"><ellipse rx="3.9" ry="2.8" fill="url(#bg1)"/><path d="M-3.0 0Q0 1.0 3.0 0" fill="none" stroke="#24150b" stroke-width="0.45"/></g><g transform="translate(74.8 78.4) rotate(160)"><ellipse rx="4.2" ry="3.2" fill="url(#bg1)"/><path d="M-3.1 0Q0 1.1 3.1 0" fill="none" stroke="#24150b" stroke-width="0.45"/></g><g transform="translate(82.1 68.0) rotate(61)"><ellipse rx="4.5" ry="3.2" fill="url(#bg1)"/><path d="M-3.4 0Q0 1.1 3.4 0" fill="none" stroke="#24150b" stroke-width="0.45"/></g><g transform="translate(84.9 40.3) rotate(127)"><ellipse rx="4.8" ry="3.2" fill="url(#bg1)"/><path d="M-3.6 0Q0 1.1 3.6 0" fill="none" stroke="#24150b" stroke-width="0.45"/></g><g transform="translate(57.4 47.4) rotate(9)"><ellipse rx="4.1" ry="2.8" fill="url(#bg1)"/><path d="M-3.1 0Q0 1.0 3.1 0" fill="none" stroke="#24150b" stroke-width="0.45"/></g><g transform="translate(83.1 50.8) rotate(11)"><ellipse rx="4.4" ry="3.3" fill="url(#bg1)"/><path d="M-3.3 0Q0 1.1 3.3 0" fill="none" stroke="#24150b" stroke-width="0.45"/></g><g transform="translate(69.1 72.3) rotate(81)"><ellipse rx="4.0" ry="2.8" fill="url(#bg1)"/><path d="M-3.0 0Q0 1.0 3.0 0" fill="none" stroke="#24150b" stroke-width="0.45"/></g><g transform="translate(81.1 31.7) rotate(145)"><ellipse rx="4.9" ry="3.4" fill="url(#bg1)"/><path d="M-3.6 0Q0 1.2 3.6 0" fill="none" stroke="#24150b" stroke-width="0.45"/></g><g transform="translate(82.0 27.3) rotate(89)"><ellipse rx="4.6" ry="3.2" fill="url(#bg1)"/><path d="M-3.4 0Q0 1.1 3.4 0" fill="none" stroke="#24150b" stroke-width="0.45"/></g><g transform="translate(64.5 9.4) rotate(109)"><ellipse rx="4.4" ry="2.9" fill="url(#bg1)"/><path d="M-3.3 0Q0 1.0 3.3 0" fill="none" stroke="#24150b" stroke-width="0.45"/></g><g transform="translate(57.6 69.9) rotate(40)"><ellipse rx="4.2" ry="2.9" fill="url(#bg1)"/><path d="M-3.1 0Q0 1.0 3.1 0" fill="none" stroke="#24150b" stroke-width="0.45"/></g><g transform="translate(61.5 78.2) rotate(176)"><ellipse rx="4.4" ry="3.4" fill="url(#bg1)"/><path d="M-3.3 0Q0 1.2 3.3 0" fill="none" stroke="#24150b" stroke-width="0.45"/></g><g transform="translate(46.9 75.8) rotate(153)"><ellipse rx="3.9" ry="2.8" fill="url(#bg1)"/><path d="M-2.9 0Q0 1.0 2.9 0" fill="none" stroke="#24150b" stroke-width="0.45"/></g><g transform="translate(63.3 23.8) rotate(148)"><ellipse rx="4.7" ry="3.1" fill="url(#bg1)"/><path d="M-3.5 0Q0 1.1 3.5 0" fill="none" stroke="#24150b" stroke-width="0.45"/></g><g transform="translate(73.2 14.5) rotate(143)"><ellipse rx="4.8" ry="3.6" fill="url(#bg1)"/><path d="M-3.6 0Q0 1.2 3.6 0" fill="none" stroke="#24150b" stroke-width="0.45"/></g><g transform="translate(48.2 6.0) rotate(3)"><ellipse rx="4.2" ry="2.8" fill="url(#bg1)"/><path d="M-3.1 0Q0 1.0 3.1 0" fill="none" stroke="#24150b" stroke-width="0.45"/></g><g transform="translate(54.2 54.2) rotate(71)"><ellipse rx="4.7" ry="3.2" fill="url(#bg1)"/><path d="M-3.5 0Q0 1.1 3.5 0" fill="none" stroke="#24150b" stroke-width="0.45"/></g><g transform="translate(47.7 11.6) rotate(29)"><ellipse rx="4.1" ry="2.8" fill="url(#bg1)"/><path d="M-3.0 0Q0 1.0 3.0 0" fill="none" stroke="#24150b" stroke-width="0.45"/></g><g transform="translate(84.0 65.4) rotate(145)"><ellipse rx="4.2" ry="3.1" fill="url(#bg1)"/><path d="M-3.2 0Q0 1.1 3.2 0" fill="none" stroke="#24150b" stroke-width="0.45"/></g><g transform="translate(83.9 21.3) rotate(66)"><ellipse rx="4.2" ry="3.0" fill="url(#bg1)"/><path d="M-3.1 0Q0 1.0 3.1 0" fill="none" stroke="#24150b" stroke-width="0.45"/></g><g transform="translate(85.0 37.5) rotate(116)"><ellipse rx="4.6" ry="3.3" fill="url(#bg1)"/><path d="M-3.4 0Q0 1.2 3.4 0" fill="none" stroke="#24150b" stroke-width="0.45"/></g><g transform="translate(82.1 77.4) rotate(165)"><ellipse rx="4.3" ry="3.2" fill="url(#bg1)"/><path d="M-3.2 0Q0 1.1 3.2 0" fill="none" stroke="#24150b" stroke-width="0.45"/></g><g transform="translate(65.2 63.8) rotate(178)"><ellipse rx="4.6" ry="3.5" fill="url(#bg1)"/><path d="M-3.5 0Q0 1.2 3.5 0" fill="none" stroke="#24150b" stroke-width="0.45"/></g><g transform="translate(61.1 33.3) rotate(56)"><ellipse rx="4.7" ry="3.6" fill="url(#bg1)"/><path d="M-3.5 0Q0 1.3 3.5 0" fill="none" stroke="#24150b" stroke-width="0.45"/></g><g transform="translate(76.4 28.4) rotate(122)"><ellipse rx="4.7" ry="3.4" fill="url(#bg1)"/><path d="M-3.6 0Q0 1.2 3.6 0" fill="none" stroke="#24150b" stroke-width="0.45"/></g><g transform="translate(53.7 74.3) rotate(74)"><ellipse rx="3.9" ry="2.9" fill="url(#bg1)"/><path d="M-3.0 0Q0 1.0 3.0 0" fill="none" stroke="#24150b" stroke-width="0.45"/></g><g transform="translate(66.4 52.0) rotate(72)"><ellipse rx="4.4" ry="3.1" fill="url(#bg1)"/><path d="M-3.3 0Q0 1.1 3.3 0" fill="none" stroke="#24150b" stroke-width="0.45"/></g><g transform="translate(78.8 13.6) rotate(46)"><ellipse rx="4.6" ry="3.4" fill="url(#bg1)"/><path d="M-3.5 0Q0 1.2 3.5 0" fill="none" stroke="#24150b" stroke-width="0.45"/></g><g transform="translate(71.9 67.5) rotate(123)"><ellipse rx="4.5" ry="3.2" fill="url(#bg1)"/><path d="M-3.4 0Q0 1.1 3.4 0" fill="none" stroke="#24150b" stroke-width="0.45"/></g><g transform="translate(72.0 24.6) rotate(37)"><ellipse rx="4.1" ry="3.1" fill="url(#bg1)"/><path d="M-3.1 0Q0 1.1 3.1 0" fill="none" stroke="#24150b" stroke-width="0.45"/></g><g transform="translate(74.7 35.7) rotate(177)"><ellipse rx="4.5" ry="3.0" fill="url(#bg1)"/><path d="M-3.3 0Q0 1.1 3.3 0" fill="none" stroke="#24150b" stroke-width="0.45"/></g><g transform="translate(86.6 44.5) rotate(133)"><ellipse rx="4.5" ry="3.1" fill="url(#bg1)"/><path d="M-3.4 0Q0 1.1 3.4 0" fill="none" stroke="#24150b" stroke-width="0.45"/></g><g transform="translate(77.7 41.5) rotate(36)"><ellipse rx="4.2" ry="2.8" fill="url(#bg1)"/><path d="M-3.1 0Q0 1.0 3.1 0" fill="none" stroke="#24150b" stroke-width="0.45"/></g><g transform="translate(64.7 68.6) rotate(117)"><ellipse rx="4.5" ry="3.1" fill="url(#bg1)"/><path d="M-3.4 0Q0 1.1 3.4 0" fill="none" stroke="#24150b" stroke-width="0.45"/></g><g transform="translate(53.1 11.7) rotate(125)"><ellipse rx="4.9" ry="3.5" fill="url(#bg1)"/><path d="M-3.7 0Q0 1.2 3.7 0" fill="none" stroke="#24150b" stroke-width="0.45"/></g><g transform="translate(75.8 46.0) rotate(48)"><ellipse rx="4.7" ry="3.6" fill="url(#bg1)"/><path d="M-3.5 0Q0 1.3 3.5 0" fill="none" stroke="#24150b" stroke-width="0.45"/></g><g transform="translate(55.7 78.5) rotate(120)"><ellipse rx="4.2" ry="2.9" fill="url(#bg1)"/><path d="M-3.1 0Q0 1.0 3.1 0" fill="none" stroke="#24150b" stroke-width="0.45"/></g><g transform="translate(61.2 18.4) rotate(25)"><ellipse rx="4.3" ry="3.2" fill="url(#bg1)"/><path d="M-3.2 0Q0 1.1 3.2 0" fill="none" stroke="#24150b" stroke-width="0.45"/></g><g transform="translate(59.3 28.9) rotate(157)"><ellipse rx="4.1" ry="3.2" fill="url(#bg1)"/><path d="M-3.0 0Q0 1.1 3.0 0" fill="none" stroke="#24150b" stroke-width="0.45"/></g><g transform="translate(64.3 28.2) rotate(97)"><ellipse rx="4.1" ry="2.9" fill="url(#bg1)"/><path d="M-3.1 0Q0 1.0 3.1 0" fill="none" stroke="#24150b" stroke-width="0.45"/></g><g transform="translate(48.0 43.0) rotate(163)"><ellipse rx="4.7" ry="3.3" fill="url(#bg1)"/><path d="M-3.5 0Q0 1.2 3.5 0" fill="none" stroke="#24150b" stroke-width="0.45"/></g><g transform="translate(72.5 19.1) rotate(31)"><ellipse rx="4.7" ry="3.6" fill="url(#bg1)"/><path d="M-3.5 0Q0 1.3 3.5 0" fill="none" stroke="#24150b" stroke-width="0.45"/></g><g transform="translate(87.5 5.7) rotate(157)"><ellipse rx="4.0" ry="2.8" fill="url(#bg1)"/><path d="M-3.0 0Q0 1.0 3.0 0" fill="none" stroke="#24150b" stroke-width="0.45"/></g><g transform="translate(83.2 9.1) rotate(130)"><ellipse rx="4.5" ry="3.1" fill="url(#bg1)"/><path d="M-3.4 0Q0 1.1 3.4 0" fill="none" stroke="#24150b" stroke-width="0.45"/></g><g transform="translate(85.2 82.2) rotate(104)"><ellipse rx="4.3" ry="2.9" fill="url(#bg1)"/><path d="M-3.2 0Q0 1.0 3.2 0" fill="none" stroke="#24150b" stroke-width="0.45"/></g><g transform="translate(70.1 58.9) rotate(51)"><ellipse rx="4.6" ry="3.1" fill="url(#bg1)"/><path d="M-3.4 0Q0 1.1 3.4 0" fill="none" stroke="#24150b" stroke-width="0.45"/></g><g transform="translate(62.2 80.0) rotate(150)"><ellipse rx="4.8" ry="3.4" fill="url(#bg1)"/><path d="M-3.6 0Q0 1.2 3.6 0" fill="none" stroke="#24150b" stroke-width="0.45"/></g><g transform="translate(54.3 54.6) rotate(158)"><ellipse rx="4.5" ry="3.4" fill="url(#bg1)"/><path d="M-3.3 0Q0 1.2 3.3 0" fill="none" stroke="#24150b" stroke-width="0.45"/></g><g transform="translate(75.7 71.0) rotate(159)"><ellipse rx="4.3" ry="2.9" fill="url(#bg1)"/><path d="M-3.2 0Q0 1.0 3.2 0" fill="none" stroke="#24150b" stroke-width="0.45"/></g><g transform="translate(76.5 32.3) rotate(49)"><ellipse rx="4.2" ry="3.0" fill="url(#bg1)"/><path d="M-3.1 0Q0 1.1 3.1 0" fill="none" stroke="#24150b" stroke-width="0.45"/></g><g transform="translate(85.8 4.2) rotate(15)"><ellipse rx="4.3" ry="3.0" fill="url(#bg1)"/><path d="M-3.2 0Q0 1.1 3.2 0" fill="none" stroke="#24150b" stroke-width="0.45"/></g><g transform="translate(51.7 47.7) rotate(101)"><ellipse rx="4.1" ry="3.0" fill="url(#bg1)"/><path d="M-3.1 0Q0 1.0 3.1 0" fill="none" stroke="#24150b" stroke-width="0.45"/></g><g transform="translate(72.9 32.4) rotate(137)"><ellipse rx="4.1" ry="2.7" fill="url(#bg1)"/><path d="M-3.0 0Q0 0.9 3.0 0" fill="none" stroke="#24150b" stroke-width="0.45"/></g><g transform="translate(83.8 73.4) rotate(61)"><ellipse rx="4.6" ry="3.0" fill="url(#bg1)"/><path d="M-3.4 0Q0 1.1 3.4 0" fill="none" stroke="#24150b" stroke-width="0.45"/></g><g transform="translate(46.8 17.1) rotate(178)"><ellipse rx="4.0" ry="3.0" fill="url(#bg1)"/><path d="M-3.0 0Q0 1.1 3.0 0" fill="none" stroke="#24150b" stroke-width="0.45"/></g><g transform="translate(58.4 65.2) rotate(63)"><ellipse rx="4.3" ry="2.9" fill="url(#bg1)"/><path d="M-3.2 0Q0 1.0 3.2 0" fill="none" stroke="#24150b" stroke-width="0.45"/></g><g transform="translate(48.5 28.6) rotate(39)"><ellipse rx="4.5" ry="3.2" fill="url(#bg1)"/><path d="M-3.3 0Q0 1.1 3.3 0" fill="none" stroke="#24150b" stroke-width="0.45"/></g><g transform="translate(72.8 83.0) rotate(45)"><ellipse rx="4.5" ry="3.4" fill="url(#bg1)"/><path d="M-3.4 0Q0 1.2 3.4 0" fill="none" stroke="#24150b" stroke-width="0.45"/></g><g transform="translate(53.5 75.7) rotate(45)"><ellipse rx="4.1" ry="2.8" fill="url(#bg1)"/><path d="M-3.1 0Q0 1.0 3.1 0" fill="none" stroke="#24150b" stroke-width="0.45"/></g><g transform="translate(70.8 53.4) rotate(169)"><ellipse rx="4.7" ry="3.4" fill="url(#bg1)"/><path d="M-3.5 0Q0 1.2 3.5 0" fill="none" stroke="#24150b" stroke-width="0.45"/></g><g transform="translate(70.8 65.4) rotate(170)"><ellipse rx="3.9" ry="3.0" fill="url(#bg1)"/><path d="M-3.0 0Q0 1.1 3.0 0" fill="none" stroke="#24150b" stroke-width="0.45"/></g><g transform="translate(50.0 57.4) rotate(49)"><ellipse rx="4.4" ry="3.3" fill="url(#bg1)"/><path d="M-3.3 0Q0 1.2 3.3 0" fill="none" stroke="#24150b" stroke-width="0.45"/></g><g transform="translate(74.8 17.6) rotate(11)"><ellipse rx="3.9" ry="2.9" fill="url(#bg1)"/><path d="M-2.9 0Q0 1.0 2.9 0" fill="none" stroke="#24150b" stroke-width="0.45"/></g><g transform="translate(64.7 13.6) rotate(11)"><ellipse rx="4.4" ry="3.3" fill="url(#bg1)"/><path d="M-3.3 0Q0 1.2 3.3 0" fill="none" stroke="#24150b" stroke-width="0.45"/></g><g transform="translate(71.1 8.9) rotate(48)"><ellipse rx="4.3" ry="3.2" fill="url(#bg1)"/><path d="M-3.2 0Q0 1.1 3.2 0" fill="none" stroke="#24150b" stroke-width="0.45"/></g><g transform="translate(72.4 5.9) rotate(89)"><ellipse rx="4.1" ry="3.2" fill="url(#bg1)"/><path d="M-3.1 0Q0 1.1 3.1 0" fill="none" stroke="#24150b" stroke-width="0.45"/></g><g transform="translate(52.0 79.7) rotate(120)"><ellipse rx="4.2" ry="3.0" fill="url(#bg1)"/><path d="M-3.2 0Q0 1.1 3.2 0" fill="none" stroke="#24150b" stroke-width="0.45"/></g><g transform="translate(75.7 18.9) rotate(169)"><ellipse rx="4.7" ry="3.5" fill="url(#bg1)"/><path d="M-3.5 0Q0 1.2 3.5 0" fill="none" stroke="#24150b" stroke-width="0.45"/></g><g transform="translate(69.2 55.2) rotate(74)"><ellipse rx="4.4" ry="3.3" fill="url(#bg1)"/><path d="M-3.3 0Q0 1.2 3.3 0" fill="none" stroke="#24150b" stroke-width="0.45"/></g><g transform="translate(73.8 67.0) rotate(2)"><ellipse rx="4.8" ry="3.5" fill="url(#bg1)"/><path d="M-3.6 0Q0 1.2 3.6 0" fill="none" stroke="#24150b" stroke-width="0.45"/></g><g transform="translate(78.5 51.2) rotate(130)"><ellipse rx="4.0" ry="2.8" fill="url(#bg1)"/><path d="M-3.0 0Q0 1.0 3.0 0" fill="none" stroke="#24150b" stroke-width="0.45"/></g><g transform="translate(58.2 46.2) rotate(179)"><ellipse rx="4.4" ry="3.1" fill="url(#bg1)"/><path d="M-3.3 0Q0 1.1 3.3 0" fill="none" stroke="#24150b" stroke-width="0.45"/></g><g transform="translate(54.6 80.9) rotate(56)"><ellipse rx="4.5" ry="3.2" fill="url(#bg1)"/><path d="M-3.4 0Q0 1.1 3.4 0" fill="none" stroke="#24150b" stroke-width="0.45"/></g><g transform="translate(71.3 49.5) rotate(107)"><ellipse rx="4.0" ry="2.9" fill="url(#bg1)"/><path d="M-3.0 0Q0 1.0 3.0 0" fill="none" stroke="#24150b" stroke-width="0.45"/></g><g transform="translate(83.6 18.8) rotate(32)"><ellipse rx="4.2" ry="2.9" fill="url(#bg1)"/><path d="M-3.1 0Q0 1.0 3.1 0" fill="none" stroke="#24150b" stroke-width="0.45"/></g><g transform="translate(63.0 7.1) rotate(55)"><ellipse rx="3.9" ry="2.7" fill="url(#bg1)"/><path d="M-3.0 0Q0 0.9 3.0 0" fill="none" stroke="#24150b" stroke-width="0.45"/></g><g transform="translate(86.1 60.3) rotate(28)"><ellipse rx="4.1" ry="2.9" fill="url(#bg1)"/><path d="M-3.1 0Q0 1.0 3.1 0" fill="none" stroke="#24150b" stroke-width="0.45"/></g><g transform="translate(57.3 19.6) rotate(4)"><ellipse rx="4.3" ry="2.9" fill="url(#bg1)"/><path d="M-3.2 0Q0 1.0 3.2 0" fill="none" stroke="#24150b" stroke-width="0.45"/></g><g transform="translate(82.2 33.1) rotate(17)"><ellipse rx="4.3" ry="2.9" fill="url(#bg1)"/><path d="M-3.2 0Q0 1.0 3.2 0" fill="none" stroke="#24150b" stroke-width="0.45"/></g><g transform="translate(82.3 17.2) rotate(137)"><ellipse rx="4.9" ry="3.7" fill="url(#bg1)"/><path d="M-3.6 0Q0 1.3 3.6 0" fill="none" stroke="#24150b" stroke-width="0.45"/></g><g transform="translate(77.6 22.9) rotate(12)"><ellipse rx="3.9" ry="2.7" fill="url(#bg1)"/><path d="M-2.9 0Q0 0.9 2.9 0" fill="none" stroke="#24150b" stroke-width="0.45"/></g><g transform="translate(64.3 45.8) rotate(58)"><ellipse rx="4.5" ry="3.3" fill="url(#bg1)"/><path d="M-3.4 0Q0 1.1 3.4 0" fill="none" stroke="#24150b" stroke-width="0.45"/></g><g transform="translate(69.0 47.4) rotate(90)"><ellipse rx="4.4" ry="3.4" fill="url(#bg1)"/><path d="M-3.3 0Q0 1.2 3.3 0" fill="none" stroke="#24150b" stroke-width="0.45"/></g><g transform="translate(57.3 57.8) rotate(146)"><ellipse rx="4.7" ry="3.6" fill="url(#bg1)"/><path d="M-3.5 0Q0 1.3 3.5 0" fill="none" stroke="#24150b" stroke-width="0.45"/></g><g transform="translate(49.5 9.6) rotate(166)"><ellipse rx="4.0" ry="2.8" fill="url(#bg1)"/><path d="M-3.0 0Q0 1.0 3.0 0" fill="none" stroke="#24150b" stroke-width="0.45"/></g><g transform="translate(53.4 73.5) rotate(95)"><ellipse rx="4.8" ry="3.6" fill="url(#bg1)"/><path d="M-3.6 0Q0 1.3 3.6 0" fill="none" stroke="#24150b" stroke-width="0.45"/></g><g transform="translate(78.2 60.0) rotate(119)"><ellipse rx="3.9" ry="2.9" fill="url(#bg1)"/><path d="M-2.9 0Q0 1.0 2.9 0" fill="none" stroke="#24150b" stroke-width="0.45"/></g><g transform="translate(58.9 23.0) rotate(111)"><ellipse rx="4.8" ry="3.2" fill="url(#bg1)"/><path d="M-3.6 0Q0 1.1 3.6 0" fill="none" stroke="#24150b" stroke-width="0.45"/></g><g transform="translate(74.3 4.8) rotate(129)"><ellipse rx="4.2" ry="3.0" fill="url(#bg1)"/><path d="M-3.2 0Q0 1.1 3.2 0" fill="none" stroke="#24150b" stroke-width="0.45"/></g><g transform="translate(67.3 27.1) rotate(166)"><ellipse rx="4.3" ry="3.4" fill="url(#bg1)"/><path d="M-3.2 0Q0 1.2 3.2 0" fill="none" stroke="#24150b" stroke-width="0.45"/></g><g transform="translate(53.3 22.1) rotate(134)"><ellipse rx="4.0" ry="3.0" fill="url(#bg1)"/><path d="M-3.0 0Q0 1.1 3.0 0" fill="none" stroke="#24150b" stroke-width="0.45"/></g><g transform="translate(60.9 47.1) rotate(151)"><ellipse rx="4.3" ry="3.1" fill="url(#bg1)"/><path d="M-3.3 0Q0 1.1 3.3 0" fill="none" stroke="#24150b" stroke-width="0.45"/></g><g transform="translate(55.1 27.9) rotate(97)"><ellipse rx="4.4" ry="3.1" fill="url(#bg1)"/><path d="M-3.3 0Q0 1.1 3.3 0" fill="none" stroke="#24150b" stroke-width="0.45"/></g><g transform="translate(51.1 52.8) rotate(95)"><ellipse rx="3.9" ry="3.0" fill="url(#bg1)"/><path d="M-3.0 0Q0 1.1 3.0 0" fill="none" stroke="#24150b" stroke-width="0.45"/></g><g transform="translate(49.4 82.6) rotate(8)"><ellipse rx="4.4" ry="3.0" fill="url(#bg1)"/><path d="M-3.3 0Q0 1.1 3.3 0" fill="none" stroke="#24150b" stroke-width="0.45"/></g><g transform="translate(83.7 50.6) rotate(97)"><ellipse rx="4.0" ry="2.8" fill="url(#bg1)"/><path d="M-3.0 0Q0 1.0 3.0 0" fill="none" stroke="#24150b" stroke-width="0.45"/></g><g transform="translate(58.1 77.7) rotate(112)"><ellipse rx="4.2" ry="2.9" fill="url(#bg1)"/><path d="M-3.2 0Q0 1.0 3.2 0" fill="none" stroke="#24150b" stroke-width="0.45"/></g><g transform="translate(49.4 48.5) rotate(99)"><ellipse rx="4.1" ry="2.9" fill="url(#bg1)"/><path d="M-3.1 0Q0 1.0 3.1 0" fill="none" stroke="#24150b" stroke-width="0.45"/></g><g transform="translate(65.6 19.7) rotate(136)"><ellipse rx="4.0" ry="3.1" fill="url(#bg1)"/><path d="M-3.0 0Q0 1.1 3.0 0" fill="none" stroke="#24150b" stroke-width="0.45"/></g><g transform="translate(76.7 22.6) rotate(34)"><ellipse rx="4.8" ry="3.2" fill="url(#bg1)"/><path d="M-3.6 0Q0 1.1 3.6 0" fill="none" stroke="#24150b" stroke-width="0.45"/></g><g transform="translate(52.2 36.8) rotate(26)"><ellipse rx="4.8" ry="3.6" fill="url(#bg1)"/><path d="M-3.6 0Q0 1.3 3.6 0" fill="none" stroke="#24150b" stroke-width="0.45"/></g><g transform="translate(61.3 38.6) rotate(45)"><ellipse rx="4.0" ry="2.7" fill="url(#bg1)"/><path d="M-3.0 0Q0 0.9 3.0 0" fill="none" stroke="#24150b" stroke-width="0.45"/></g><g transform="translate(68.1 6.7) rotate(7)"><ellipse rx="4.2" ry="2.8" fill="url(#bg1)"/><path d="M-3.1 0Q0 1.0 3.1 0" fill="none" stroke="#24150b" stroke-width="0.45"/></g><g transform="translate(57.3 54.8) rotate(63)"><ellipse rx="4.2" ry="3.1" fill="url(#bg1)"/><path d="M-3.2 0Q0 1.1 3.2 0" fill="none" stroke="#24150b" stroke-width="0.45"/></g><g transform="translate(61.4 56.6) rotate(77)"><ellipse rx="4.1" ry="2.7" fill="url(#bg1)"/><path d="M-3.1 0Q0 1.0 3.1 0" fill="none" stroke="#24150b" stroke-width="0.45"/></g><g transform="translate(66.2 59.7) rotate(43)"><ellipse rx="4.4" ry="3.4" fill="url(#bg1)"/><path d="M-3.3 0Q0 1.2 3.3 0" fill="none" stroke="#24150b" stroke-width="0.45"/></g><g transform="translate(84.9 57.0) rotate(136)"><ellipse rx="4.0" ry="2.9" fill="url(#bg1)"/><path d="M-3.0 0Q0 1.0 3.0 0" fill="none" stroke="#24150b" stroke-width="0.45"/></g><g transform="translate(65.2 8.6) rotate(89)"><ellipse rx="4.8" ry="3.2" fill="url(#bg1)"/><path d="M-3.6 0Q0 1.1 3.6 0" fill="none" stroke="#24150b" stroke-width="0.45"/></g><g transform="translate(75.1 79.0) rotate(175)"><ellipse rx="4.0" ry="3.0" fill="url(#bg1)"/><path d="M-3.0 0Q0 1.1 3.0 0" fill="none" stroke="#24150b" stroke-width="0.45"/></g><g transform="translate(77.6 63.9) rotate(146)"><ellipse rx="4.0" ry="3.1" fill="url(#bg1)"/><path d="M-3.0 0Q0 1.1 3.0 0" fill="none" stroke="#24150b" stroke-width="0.45"/></g><g transform="translate(63.4 71.7) rotate(167)"><ellipse rx="4.1" ry="2.9" fill="url(#bg1)"/><path d="M-3.1 0Q0 1.0 3.1 0" fill="none" stroke="#24150b" stroke-width="0.45"/></g></g><g clip-path="url(#cp2)"><rect x="90.3" y="3" width="42.4" height="81" fill="#160e08"/><g transform="translate(112.3 45.7) rotate(39)"><ellipse rx="4.6" ry="3.2" fill="url(#bg2)"/><path d="M-3.4 0Q0 1.1 3.4 0" fill="none" stroke="#160e08" stroke-width="0.45"/></g><g transform="translate(91.0 47.8) rotate(131)"><ellipse rx="4.5" ry="3.1" fill="url(#bg2)"/><path d="M-3.4 0Q0 1.1 3.4 0" fill="none" stroke="#160e08" stroke-width="0.45"/></g><g transform="translate(97.6 9.8) rotate(99)"><ellipse rx="4.8" ry="3.2" fill="url(#bg2)"/><path d="M-3.6 0Q0 1.1 3.6 0" fill="none" stroke="#160e08" stroke-width="0.45"/></g><g transform="translate(125.2 41.8) rotate(134)"><ellipse rx="4.5" ry="3.5" fill="url(#bg2)"/><path d="M-3.4 0Q0 1.2 3.4 0" fill="none" stroke="#160e08" stroke-width="0.45"/></g><g transform="translate(124.5 37.4) rotate(168)"><ellipse rx="4.2" ry="2.8" fill="url(#bg2)"/><path d="M-3.2 0Q0 1.0 3.2 0" fill="none" stroke="#160e08" stroke-width="0.45"/></g><g transform="translate(119.4 14.3) rotate(66)"><ellipse rx="4.9" ry="3.3" fill="url(#bg2)"/><path d="M-3.6 0Q0 1.2 3.6 0" fill="none" stroke="#160e08" stroke-width="0.45"/></g><g transform="translate(126.1 28.2) rotate(171)"><ellipse rx="4.3" ry="2.9" fill="url(#bg2)"/><path d="M-3.2 0Q0 1.0 3.2 0" fill="none" stroke="#160e08" stroke-width="0.45"/></g><g transform="translate(105.0 13.4) rotate(74)"><ellipse rx="4.6" ry="3.1" fill="url(#bg2)"/><path d="M-3.4 0Q0 1.1 3.4 0" fill="none" stroke="#160e08" stroke-width="0.45"/></g><g transform="translate(100.4 23.2) rotate(175)"><ellipse rx="4.0" ry="3.1" fill="url(#bg2)"/><path d="M-3.0 0Q0 1.1 3.0 0" fill="none" stroke="#160e08" stroke-width="0.45"/></g><g transform="translate(119.4 23.9) rotate(98)"><ellipse rx="4.9" ry="3.8" fill="url(#bg2)"/><path d="M-3.7 0Q0 1.3 3.7 0" fill="none" stroke="#160e08" stroke-width="0.45"/></g><g transform="translate(91.3 23.3) rotate(15)"><ellipse rx="4.3" ry="3.2" fill="url(#bg2)"/><path d="M-3.3 0Q0 1.1 3.3 0" fill="none" stroke="#160e08" stroke-width="0.45"/></g><g transform="translate(91.7 15.1) rotate(167)"><ellipse rx="4.6" ry="3.4" fill="url(#bg2)"/><path d="M-3.4 0Q0 1.2 3.4 0" fill="none" stroke="#160e08" stroke-width="0.45"/></g><g transform="translate(97.8 34.8) rotate(25)"><ellipse rx="4.8" ry="3.2" fill="url(#bg2)"/><path d="M-3.6 0Q0 1.1 3.6 0" fill="none" stroke="#160e08" stroke-width="0.45"/></g><g transform="translate(110.7 45.8) rotate(5)"><ellipse rx="4.1" ry="3.0" fill="url(#bg2)"/><path d="M-3.1 0Q0 1.1 3.1 0" fill="none" stroke="#160e08" stroke-width="0.45"/></g><g transform="translate(113.5 18.2) rotate(16)"><ellipse rx="4.8" ry="3.7" fill="url(#bg2)"/><path d="M-3.6 0Q0 1.3 3.6 0" fill="none" stroke="#160e08" stroke-width="0.45"/></g><g transform="translate(108.2 73.4) rotate(39)"><ellipse rx="4.8" ry="3.3" fill="url(#bg2)"/><path d="M-3.6 0Q0 1.2 3.6 0" fill="none" stroke="#160e08" stroke-width="0.45"/></g><g transform="translate(98.3 77.8) rotate(97)"><ellipse rx="4.2" ry="2.8" fill="url(#bg2)"/><path d="M-3.1 0Q0 1.0 3.1 0" fill="none" stroke="#160e08" stroke-width="0.45"/></g><g transform="translate(113.0 64.2) rotate(77)"><ellipse rx="4.8" ry="3.2" fill="url(#bg2)"/><path d="M-3.6 0Q0 1.1 3.6 0" fill="none" stroke="#160e08" stroke-width="0.45"/></g><g transform="translate(107.1 59.0) rotate(143)"><ellipse rx="4.7" ry="3.4" fill="url(#bg2)"/><path d="M-3.5 0Q0 1.2 3.5 0" fill="none" stroke="#160e08" stroke-width="0.45"/></g><g transform="translate(120.2 74.7) rotate(162)"><ellipse rx="4.9" ry="3.6" fill="url(#bg2)"/><path d="M-3.7 0Q0 1.2 3.7 0" fill="none" stroke="#160e08" stroke-width="0.45"/></g><g transform="translate(107.4 55.0) rotate(138)"><ellipse rx="4.2" ry="2.9" fill="url(#bg2)"/><path d="M-3.2 0Q0 1.0 3.2 0" fill="none" stroke="#160e08" stroke-width="0.45"/></g><g transform="translate(91.9 27.4) rotate(20)"><ellipse rx="4.1" ry="3.1" fill="url(#bg2)"/><path d="M-3.0 0Q0 1.1 3.0 0" fill="none" stroke="#160e08" stroke-width="0.45"/></g><g transform="translate(96.7 4.1) rotate(178)"><ellipse rx="4.2" ry="2.9" fill="url(#bg2)"/><path d="M-3.1 0Q0 1.0 3.1 0" fill="none" stroke="#160e08" stroke-width="0.45"/></g><g transform="translate(129.0 69.5) rotate(34)"><ellipse rx="4.3" ry="2.9" fill="url(#bg2)"/><path d="M-3.2 0Q0 1.0 3.2 0" fill="none" stroke="#160e08" stroke-width="0.45"/></g><g transform="translate(108.7 3.4) rotate(138)"><ellipse rx="4.5" ry="3.4" fill="url(#bg2)"/><path d="M-3.4 0Q0 1.2 3.4 0" fill="none" stroke="#160e08" stroke-width="0.45"/></g><g transform="translate(90.7 31.7) rotate(67)"><ellipse rx="4.6" ry="3.1" fill="url(#bg2)"/><path d="M-3.4 0Q0 1.1 3.4 0" fill="none" stroke="#160e08" stroke-width="0.45"/></g><g transform="translate(91.5 65.4) rotate(71)"><ellipse rx="4.9" ry="3.3" fill="url(#bg2)"/><path d="M-3.6 0Q0 1.2 3.6 0" fill="none" stroke="#160e08" stroke-width="0.45"/></g><g transform="translate(92.2 59.9) rotate(39)"><ellipse rx="4.1" ry="2.9" fill="url(#bg2)"/><path d="M-3.1 0Q0 1.0 3.1 0" fill="none" stroke="#160e08" stroke-width="0.45"/></g><g transform="translate(126.0 12.5) rotate(44)"><ellipse rx="4.3" ry="3.3" fill="url(#bg2)"/><path d="M-3.2 0Q0 1.2 3.2 0" fill="none" stroke="#160e08" stroke-width="0.45"/></g><g transform="translate(94.4 35.1) rotate(130)"><ellipse rx="3.9" ry="2.8" fill="url(#bg2)"/><path d="M-3.0 0Q0 1.0 3.0 0" fill="none" stroke="#160e08" stroke-width="0.45"/></g><g transform="translate(95.3 64.4) rotate(117)"><ellipse rx="4.4" ry="3.1" fill="url(#bg2)"/><path d="M-3.3 0Q0 1.1 3.3 0" fill="none" stroke="#160e08" stroke-width="0.45"/></g><g transform="translate(123.8 30.6) rotate(36)"><ellipse rx="4.8" ry="3.4" fill="url(#bg2)"/><path d="M-3.6 0Q0 1.2 3.6 0" fill="none" stroke="#160e08" stroke-width="0.45"/></g><g transform="translate(129.4 39.7) rotate(40)"><ellipse rx="4.1" ry="2.9" fill="url(#bg2)"/><path d="M-3.1 0Q0 1.0 3.1 0" fill="none" stroke="#160e08" stroke-width="0.45"/></g><g transform="translate(104.9 72.3) rotate(122)"><ellipse rx="4.8" ry="3.3" fill="url(#bg2)"/><path d="M-3.6 0Q0 1.2 3.6 0" fill="none" stroke="#160e08" stroke-width="0.45"/></g><g transform="translate(99.6 4.9) rotate(103)"><ellipse rx="4.5" ry="3.3" fill="url(#bg2)"/><path d="M-3.4 0Q0 1.2 3.4 0" fill="none" stroke="#160e08" stroke-width="0.45"/></g><g transform="translate(92.1 69.5) rotate(56)"><ellipse rx="4.5" ry="3.0" fill="url(#bg2)"/><path d="M-3.4 0Q0 1.0 3.4 0" fill="none" stroke="#160e08" stroke-width="0.45"/></g><g transform="translate(124.3 39.0) rotate(133)"><ellipse rx="4.0" ry="2.9" fill="url(#bg2)"/><path d="M-3.0 0Q0 1.0 3.0 0" fill="none" stroke="#160e08" stroke-width="0.45"/></g><g transform="translate(99.3 47.3) rotate(45)"><ellipse rx="4.1" ry="2.7" fill="url(#bg2)"/><path d="M-3.1 0Q0 1.0 3.1 0" fill="none" stroke="#160e08" stroke-width="0.45"/></g><g transform="translate(122.9 13.5) rotate(91)"><ellipse rx="4.0" ry="3.0" fill="url(#bg2)"/><path d="M-3.0 0Q0 1.0 3.0 0" fill="none" stroke="#160e08" stroke-width="0.45"/></g><g transform="translate(118.0 50.1) rotate(100)"><ellipse rx="4.3" ry="2.9" fill="url(#bg2)"/><path d="M-3.3 0Q0 1.0 3.3 0" fill="none" stroke="#160e08" stroke-width="0.45"/></g><g transform="translate(100.7 81.0) rotate(13)"><ellipse rx="4.0" ry="3.0" fill="url(#bg2)"/><path d="M-3.0 0Q0 1.0 3.0 0" fill="none" stroke="#160e08" stroke-width="0.45"/></g><g transform="translate(126.7 65.1) rotate(180)"><ellipse rx="4.0" ry="3.0" fill="url(#bg2)"/><path d="M-3.0 0Q0 1.1 3.0 0" fill="none" stroke="#160e08" stroke-width="0.45"/></g><g transform="translate(119.7 71.0) rotate(42)"><ellipse rx="4.3" ry="3.2" fill="url(#bg2)"/><path d="M-3.2 0Q0 1.1 3.2 0" fill="none" stroke="#160e08" stroke-width="0.45"/></g><g transform="translate(130.5 15.6) rotate(163)"><ellipse rx="4.9" ry="3.4" fill="url(#bg2)"/><path d="M-3.7 0Q0 1.2 3.7 0" fill="none" stroke="#160e08" stroke-width="0.45"/></g><g transform="translate(130.1 76.6) rotate(12)"><ellipse rx="4.5" ry="3.5" fill="url(#bg2)"/><path d="M-3.3 0Q0 1.2 3.3 0" fill="none" stroke="#160e08" stroke-width="0.45"/></g><g transform="translate(127.1 57.6) rotate(9)"><ellipse rx="4.9" ry="3.8" fill="url(#bg2)"/><path d="M-3.7 0Q0 1.3 3.7 0" fill="none" stroke="#160e08" stroke-width="0.45"/></g><g transform="translate(90.7 52.1) rotate(76)"><ellipse rx="3.9" ry="3.0" fill="url(#bg2)"/><path d="M-2.9 0Q0 1.1 2.9 0" fill="none" stroke="#160e08" stroke-width="0.45"/></g><g transform="translate(101.5 33.7) rotate(29)"><ellipse rx="4.1" ry="2.7" fill="url(#bg2)"/><path d="M-3.0 0Q0 0.9 3.0 0" fill="none" stroke="#160e08" stroke-width="0.45"/></g><g transform="translate(127.0 49.7) rotate(57)"><ellipse rx="4.4" ry="3.0" fill="url(#bg2)"/><path d="M-3.3 0Q0 1.1 3.3 0" fill="none" stroke="#160e08" stroke-width="0.45"/></g><g transform="translate(124.0 76.8) rotate(145)"><ellipse rx="4.0" ry="2.7" fill="url(#bg2)"/><path d="M-3.0 0Q0 1.0 3.0 0" fill="none" stroke="#160e08" stroke-width="0.45"/></g><g transform="translate(124.3 11.6) rotate(43)"><ellipse rx="4.2" ry="2.8" fill="url(#bg2)"/><path d="M-3.2 0Q0 1.0 3.2 0" fill="none" stroke="#160e08" stroke-width="0.45"/></g><g transform="translate(103.9 10.0) rotate(153)"><ellipse rx="4.6" ry="3.2" fill="url(#bg2)"/><path d="M-3.5 0Q0 1.1 3.5 0" fill="none" stroke="#160e08" stroke-width="0.45"/></g><g transform="translate(122.8 17.9) rotate(66)"><ellipse rx="4.8" ry="3.5" fill="url(#bg2)"/><path d="M-3.6 0Q0 1.2 3.6 0" fill="none" stroke="#160e08" stroke-width="0.45"/></g><g transform="translate(99.3 50.7) rotate(26)"><ellipse rx="4.6" ry="3.6" fill="url(#bg2)"/><path d="M-3.5 0Q0 1.2 3.5 0" fill="none" stroke="#160e08" stroke-width="0.45"/></g><g transform="translate(127.0 35.0) rotate(131)"><ellipse rx="4.8" ry="3.7" fill="url(#bg2)"/><path d="M-3.6 0Q0 1.3 3.6 0" fill="none" stroke="#160e08" stroke-width="0.45"/></g><g transform="translate(120.6 28.4) rotate(58)"><ellipse rx="4.6" ry="3.1" fill="url(#bg2)"/><path d="M-3.4 0Q0 1.1 3.4 0" fill="none" stroke="#160e08" stroke-width="0.45"/></g><g transform="translate(123.5 79.9) rotate(94)"><ellipse rx="4.5" ry="3.1" fill="url(#bg2)"/><path d="M-3.4 0Q0 1.1 3.4 0" fill="none" stroke="#160e08" stroke-width="0.45"/></g><g transform="translate(92.0 15.3) rotate(145)"><ellipse rx="4.7" ry="3.4" fill="url(#bg2)"/><path d="M-3.5 0Q0 1.2 3.5 0" fill="none" stroke="#160e08" stroke-width="0.45"/></g><g transform="translate(125.2 59.6) rotate(118)"><ellipse rx="4.2" ry="2.8" fill="url(#bg2)"/><path d="M-3.1 0Q0 1.0 3.1 0" fill="none" stroke="#160e08" stroke-width="0.45"/></g><g transform="translate(117.0 10.6) rotate(176)"><ellipse rx="3.9" ry="3.0" fill="url(#bg2)"/><path d="M-2.9 0Q0 1.1 2.9 0" fill="none" stroke="#160e08" stroke-width="0.45"/></g><g transform="translate(121.4 33.2) rotate(33)"><ellipse rx="4.8" ry="3.6" fill="url(#bg2)"/><path d="M-3.6 0Q0 1.3 3.6 0" fill="none" stroke="#160e08" stroke-width="0.45"/></g><g transform="translate(104.7 61.1) rotate(19)"><ellipse rx="4.9" ry="3.6" fill="url(#bg2)"/><path d="M-3.6 0Q0 1.3 3.6 0" fill="none" stroke="#160e08" stroke-width="0.45"/></g><g transform="translate(92.7 11.6) rotate(108)"><ellipse rx="4.4" ry="3.4" fill="url(#bg2)"/><path d="M-3.3 0Q0 1.2 3.3 0" fill="none" stroke="#160e08" stroke-width="0.45"/></g><g transform="translate(107.3 31.4) rotate(88)"><ellipse rx="4.3" ry="3.3" fill="url(#bg2)"/><path d="M-3.2 0Q0 1.2 3.2 0" fill="none" stroke="#160e08" stroke-width="0.45"/></g><g transform="translate(107.2 67.4) rotate(84)"><ellipse rx="3.9" ry="2.7" fill="url(#bg2)"/><path d="M-3.0 0Q0 0.9 3.0 0" fill="none" stroke="#160e08" stroke-width="0.45"/></g><g transform="translate(104.0 14.3) rotate(105)"><ellipse rx="4.6" ry="3.3" fill="url(#bg2)"/><path d="M-3.4 0Q0 1.1 3.4 0" fill="none" stroke="#160e08" stroke-width="0.45"/></g><g transform="translate(99.2 64.8) rotate(8)"><ellipse rx="4.4" ry="3.1" fill="url(#bg2)"/><path d="M-3.3 0Q0 1.1 3.3 0" fill="none" stroke="#160e08" stroke-width="0.45"/></g><g transform="translate(118.1 55.9) rotate(173)"><ellipse rx="4.3" ry="3.3" fill="url(#bg2)"/><path d="M-3.2 0Q0 1.1 3.2 0" fill="none" stroke="#160e08" stroke-width="0.45"/></g><g transform="translate(104.5 53.7) rotate(173)"><ellipse rx="3.9" ry="2.8" fill="url(#bg2)"/><path d="M-2.9 0Q0 1.0 2.9 0" fill="none" stroke="#160e08" stroke-width="0.45"/></g><g transform="translate(101.1 80.4) rotate(4)"><ellipse rx="4.5" ry="3.0" fill="url(#bg2)"/><path d="M-3.4 0Q0 1.1 3.4 0" fill="none" stroke="#160e08" stroke-width="0.45"/></g><g transform="translate(106.1 17.0) rotate(175)"><ellipse rx="4.2" ry="2.9" fill="url(#bg2)"/><path d="M-3.2 0Q0 1.0 3.2 0" fill="none" stroke="#160e08" stroke-width="0.45"/></g><g transform="translate(92.7 17.9) rotate(101)"><ellipse rx="4.2" ry="3.2" fill="url(#bg2)"/><path d="M-3.2 0Q0 1.1 3.2 0" fill="none" stroke="#160e08" stroke-width="0.45"/></g><g transform="translate(122.0 3.6) rotate(134)"><ellipse rx="4.6" ry="3.2" fill="url(#bg2)"/><path d="M-3.4 0Q0 1.1 3.4 0" fill="none" stroke="#160e08" stroke-width="0.45"/></g><g transform="translate(103.3 19.8) rotate(104)"><ellipse rx="4.1" ry="2.8" fill="url(#bg2)"/><path d="M-3.0 0Q0 1.0 3.0 0" fill="none" stroke="#160e08" stroke-width="0.45"/></g><g transform="translate(124.5 50.0) rotate(106)"><ellipse rx="4.5" ry="3.2" fill="url(#bg2)"/><path d="M-3.4 0Q0 1.1 3.4 0" fill="none" stroke="#160e08" stroke-width="0.45"/></g><g transform="translate(112.5 33.8) rotate(88)"><ellipse rx="4.2" ry="3.2" fill="url(#bg2)"/><path d="M-3.1 0Q0 1.1 3.1 0" fill="none" stroke="#160e08" stroke-width="0.45"/></g><g transform="translate(98.8 14.6) rotate(160)"><ellipse rx="4.6" ry="3.4" fill="url(#bg2)"/><path d="M-3.4 0Q0 1.2 3.4 0" fill="none" stroke="#160e08" stroke-width="0.45"/></g><g transform="translate(98.4 69.2) rotate(101)"><ellipse rx="4.6" ry="3.3" fill="url(#bg2)"/><path d="M-3.4 0Q0 1.1 3.4 0" fill="none" stroke="#160e08" stroke-width="0.45"/></g><g transform="translate(127.1 10.9) rotate(168)"><ellipse rx="4.8" ry="3.6" fill="url(#bg2)"/><path d="M-3.6 0Q0 1.3 3.6 0" fill="none" stroke="#160e08" stroke-width="0.45"/></g><g transform="translate(113.5 13.6) rotate(73)"><ellipse rx="4.2" ry="3.1" fill="url(#bg2)"/><path d="M-3.2 0Q0 1.1 3.2 0" fill="none" stroke="#160e08" stroke-width="0.45"/></g><g transform="translate(117.1 82.5) rotate(115)"><ellipse rx="4.6" ry="3.2" fill="url(#bg2)"/><path d="M-3.5 0Q0 1.1 3.5 0" fill="none" stroke="#160e08" stroke-width="0.45"/></g><g transform="translate(94.1 49.3) rotate(86)"><ellipse rx="4.5" ry="3.0" fill="url(#bg2)"/><path d="M-3.4 0Q0 1.0 3.4 0" fill="none" stroke="#160e08" stroke-width="0.45"/></g><g transform="translate(124.2 45.8) rotate(144)"><ellipse rx="4.0" ry="3.0" fill="url(#bg2)"/><path d="M-3.0 0Q0 1.1 3.0 0" fill="none" stroke="#160e08" stroke-width="0.45"/></g><g transform="translate(103.3 53.2) rotate(119)"><ellipse rx="4.6" ry="3.4" fill="url(#bg2)"/><path d="M-3.4 0Q0 1.2 3.4 0" fill="none" stroke="#160e08" stroke-width="0.45"/></g><g transform="translate(122.4 57.9) rotate(152)"><ellipse rx="4.3" ry="3.1" fill="url(#bg2)"/><path d="M-3.2 0Q0 1.1 3.2 0" fill="none" stroke="#160e08" stroke-width="0.45"/></g><g transform="translate(126.8 17.2) rotate(58)"><ellipse rx="4.5" ry="3.0" fill="url(#bg2)"/><path d="M-3.4 0Q0 1.0 3.4 0" fill="none" stroke="#160e08" stroke-width="0.45"/></g><g transform="translate(129.6 53.0) rotate(26)"><ellipse rx="4.5" ry="3.0" fill="url(#bg2)"/><path d="M-3.4 0Q0 1.1 3.4 0" fill="none" stroke="#160e08" stroke-width="0.45"/></g><g transform="translate(129.5 71.3) rotate(9)"><ellipse rx="3.9" ry="2.8" fill="url(#bg2)"/><path d="M-2.9 0Q0 1.0 2.9 0" fill="none" stroke="#160e08" stroke-width="0.45"/></g><g transform="translate(102.9 63.8) rotate(105)"><ellipse rx="4.2" ry="2.8" fill="url(#bg2)"/><path d="M-3.1 0Q0 1.0 3.1 0" fill="none" stroke="#160e08" stroke-width="0.45"/></g><g transform="translate(101.9 46.9) rotate(35)"><ellipse rx="4.3" ry="2.9" fill="url(#bg2)"/><path d="M-3.2 0Q0 1.0 3.2 0" fill="none" stroke="#160e08" stroke-width="0.45"/></g><g transform="translate(117.4 25.1) rotate(64)"><ellipse rx="4.5" ry="3.0" fill="url(#bg2)"/><path d="M-3.4 0Q0 1.1 3.4 0" fill="none" stroke="#160e08" stroke-width="0.45"/></g><g transform="translate(99.6 71.6) rotate(155)"><ellipse rx="4.0" ry="2.6" fill="url(#bg2)"/><path d="M-3.0 0Q0 0.9 3.0 0" fill="none" stroke="#160e08" stroke-width="0.45"/></g><g transform="translate(99.1 28.3) rotate(120)"><ellipse rx="4.1" ry="2.8" fill="url(#bg2)"/><path d="M-3.0 0Q0 1.0 3.0 0" fill="none" stroke="#160e08" stroke-width="0.45"/></g><g transform="translate(128.3 61.9) rotate(116)"><ellipse rx="4.4" ry="3.4" fill="url(#bg2)"/><path d="M-3.3 0Q0 1.2 3.3 0" fill="none" stroke="#160e08" stroke-width="0.45"/></g><g transform="translate(120.5 59.9) rotate(54)"><ellipse rx="4.6" ry="3.3" fill="url(#bg2)"/><path d="M-3.4 0Q0 1.1 3.4 0" fill="none" stroke="#160e08" stroke-width="0.45"/></g><g transform="translate(118.0 12.2) rotate(44)"><ellipse rx="4.6" ry="3.1" fill="url(#bg2)"/><path d="M-3.4 0Q0 1.1 3.4 0" fill="none" stroke="#160e08" stroke-width="0.45"/></g><g transform="translate(107.1 27.1) rotate(54)"><ellipse rx="4.6" ry="3.2" fill="url(#bg2)"/><path d="M-3.5 0Q0 1.1 3.5 0" fill="none" stroke="#160e08" stroke-width="0.45"/></g><g transform="translate(130.1 5.4) rotate(86)"><ellipse rx="4.8" ry="3.2" fill="url(#bg2)"/><path d="M-3.6 0Q0 1.1 3.6 0" fill="none" stroke="#160e08" stroke-width="0.45"/></g><g transform="translate(124.5 79.4) rotate(146)"><ellipse rx="4.6" ry="3.1" fill="url(#bg2)"/><path d="M-3.5 0Q0 1.1 3.5 0" fill="none" stroke="#160e08" stroke-width="0.45"/></g><g transform="translate(121.7 40.2) rotate(85)"><ellipse rx="4.9" ry="3.6" fill="url(#bg2)"/><path d="M-3.6 0Q0 1.3 3.6 0" fill="none" stroke="#160e08" stroke-width="0.45"/></g><g transform="translate(114.5 74.4) rotate(72)"><ellipse rx="4.5" ry="3.4" fill="url(#bg2)"/><path d="M-3.4 0Q0 1.2 3.4 0" fill="none" stroke="#160e08" stroke-width="0.45"/></g><g transform="translate(108.5 37.5) rotate(176)"><ellipse rx="4.8" ry="3.7" fill="url(#bg2)"/><path d="M-3.6 0Q0 1.3 3.6 0" fill="none" stroke="#160e08" stroke-width="0.45"/></g><g transform="translate(115.6 28.4) rotate(52)"><ellipse rx="4.1" ry="2.8" fill="url(#bg2)"/><path d="M-3.0 0Q0 1.0 3.0 0" fill="none" stroke="#160e08" stroke-width="0.45"/></g><g transform="translate(105.7 64.0) rotate(110)"><ellipse rx="4.3" ry="3.0" fill="url(#bg2)"/><path d="M-3.2 0Q0 1.0 3.2 0" fill="none" stroke="#160e08" stroke-width="0.45"/></g><g transform="translate(127.4 23.2) rotate(127)"><ellipse rx="4.7" ry="3.2" fill="url(#bg2)"/><path d="M-3.5 0Q0 1.1 3.5 0" fill="none" stroke="#160e08" stroke-width="0.45"/></g><g transform="translate(110.5 50.9) rotate(120)"><ellipse rx="4.5" ry="3.4" fill="url(#bg2)"/><path d="M-3.4 0Q0 1.2 3.4 0" fill="none" stroke="#160e08" stroke-width="0.45"/></g><g transform="translate(111.1 35.0) rotate(71)"><ellipse rx="4.3" ry="3.1" fill="url(#bg2)"/><path d="M-3.3 0Q0 1.1 3.3 0" fill="none" stroke="#160e08" stroke-width="0.45"/></g><g transform="translate(130.2 8.6) rotate(48)"><ellipse rx="4.7" ry="3.1" fill="url(#bg2)"/><path d="M-3.5 0Q0 1.1 3.5 0" fill="none" stroke="#160e08" stroke-width="0.45"/></g><g transform="translate(93.9 14.2) rotate(40)"><ellipse rx="4.4" ry="3.4" fill="url(#bg2)"/><path d="M-3.3 0Q0 1.2 3.3 0" fill="none" stroke="#160e08" stroke-width="0.45"/></g><g transform="translate(105.2 40.1) rotate(159)"><ellipse rx="4.6" ry="3.1" fill="url(#bg2)"/><path d="M-3.5 0Q0 1.1 3.5 0" fill="none" stroke="#160e08" stroke-width="0.45"/></g><g transform="translate(95.6 72.3) rotate(42)"><ellipse rx="4.4" ry="3.4" fill="url(#bg2)"/><path d="M-3.3 0Q0 1.2 3.3 0" fill="none" stroke="#160e08" stroke-width="0.45"/></g><g transform="translate(102.1 51.4) rotate(28)"><ellipse rx="4.5" ry="3.0" fill="url(#bg2)"/><path d="M-3.4 0Q0 1.1 3.4 0" fill="none" stroke="#160e08" stroke-width="0.45"/></g><g transform="translate(92.0 19.6) rotate(124)"><ellipse rx="4.3" ry="3.1" fill="url(#bg2)"/><path d="M-3.2 0Q0 1.1 3.2 0" fill="none" stroke="#160e08" stroke-width="0.45"/></g><g transform="translate(107.0 58.2) rotate(139)"><ellipse rx="3.9" ry="2.7" fill="url(#bg2)"/><path d="M-2.9 0Q0 1.0 2.9 0" fill="none" stroke="#160e08" stroke-width="0.45"/></g><g transform="translate(106.5 77.7) rotate(10)"><ellipse rx="4.0" ry="2.8" fill="url(#bg2)"/><path d="M-3.0 0Q0 1.0 3.0 0" fill="none" stroke="#160e08" stroke-width="0.45"/></g><g transform="translate(118.1 38.0) rotate(105)"><ellipse rx="3.9" ry="2.8" fill="url(#bg2)"/><path d="M-2.9 0Q0 1.0 2.9 0" fill="none" stroke="#160e08" stroke-width="0.45"/></g><g transform="translate(126.6 46.9) rotate(10)"><ellipse rx="4.2" ry="3.0" fill="url(#bg2)"/><path d="M-3.2 0Q0 1.1 3.2 0" fill="none" stroke="#160e08" stroke-width="0.45"/></g><g transform="translate(128.3 83.6) rotate(179)"><ellipse rx="4.0" ry="2.8" fill="url(#bg2)"/><path d="M-3.0 0Q0 1.0 3.0 0" fill="none" stroke="#160e08" stroke-width="0.45"/></g><g transform="translate(96.9 26.1) rotate(127)"><ellipse rx="4.0" ry="2.7" fill="url(#bg2)"/><path d="M-3.0 0Q0 0.9 3.0 0" fill="none" stroke="#160e08" stroke-width="0.45"/></g><g transform="translate(101.0 58.5) rotate(95)"><ellipse rx="4.0" ry="3.0" fill="url(#bg2)"/><path d="M-3.0 0Q0 1.0 3.0 0" fill="none" stroke="#160e08" stroke-width="0.45"/></g><g transform="translate(115.6 45.7) rotate(66)"><ellipse rx="4.2" ry="3.2" fill="url(#bg2)"/><path d="M-3.1 0Q0 1.1 3.1 0" fill="none" stroke="#160e08" stroke-width="0.45"/></g><g transform="translate(100.8 41.9) rotate(61)"><ellipse rx="4.3" ry="3.1" fill="url(#bg2)"/><path d="M-3.3 0Q0 1.1 3.3 0" fill="none" stroke="#160e08" stroke-width="0.45"/></g><g transform="translate(115.8 67.9) rotate(155)"><ellipse rx="4.9" ry="3.4" fill="url(#bg2)"/><path d="M-3.6 0Q0 1.2 3.6 0" fill="none" stroke="#160e08" stroke-width="0.45"/></g><g transform="translate(93.0 56.1) rotate(39)"><ellipse rx="4.8" ry="3.4" fill="url(#bg2)"/><path d="M-3.6 0Q0 1.2 3.6 0" fill="none" stroke="#160e08" stroke-width="0.45"/></g><g transform="translate(91.4 81.0) rotate(165)"><ellipse rx="4.8" ry="3.6" fill="url(#bg2)"/><path d="M-3.6 0Q0 1.3 3.6 0" fill="none" stroke="#160e08" stroke-width="0.45"/></g><g transform="translate(115.6 59.1) rotate(86)"><ellipse rx="4.0" ry="2.8" fill="url(#bg2)"/><path d="M-3.0 0Q0 1.0 3.0 0" fill="none" stroke="#160e08" stroke-width="0.45"/></g><g transform="translate(91.7 41.3) rotate(146)"><ellipse rx="4.3" ry="3.2" fill="url(#bg2)"/><path d="M-3.2 0Q0 1.1 3.2 0" fill="none" stroke="#160e08" stroke-width="0.45"/></g><g transform="translate(129.4 69.3) rotate(171)"><ellipse rx="4.8" ry="3.5" fill="url(#bg2)"/><path d="M-3.6 0Q0 1.2 3.6 0" fill="none" stroke="#160e08" stroke-width="0.45"/></g><g transform="translate(130.2 32.1) rotate(2)"><ellipse rx="4.5" ry="3.2" fill="url(#bg2)"/><path d="M-3.4 0Q0 1.1 3.4 0" fill="none" stroke="#160e08" stroke-width="0.45"/></g><g transform="translate(122.1 69.9) rotate(178)"><ellipse rx="4.0" ry="2.7" fill="url(#bg2)"/><path d="M-3.0 0Q0 1.0 3.0 0" fill="none" stroke="#160e08" stroke-width="0.45"/></g><g transform="translate(116.2 5.1) rotate(174)"><ellipse rx="4.5" ry="3.1" fill="url(#bg2)"/><path d="M-3.4 0Q0 1.1 3.4 0" fill="none" stroke="#160e08" stroke-width="0.45"/></g><g transform="translate(105.4 70.4) rotate(168)"><ellipse rx="4.7" ry="3.4" fill="url(#bg2)"/><path d="M-3.5 0Q0 1.2 3.5 0" fill="none" stroke="#160e08" stroke-width="0.45"/></g><g transform="translate(125.0 64.6) rotate(7)"><ellipse rx="4.2" ry="3.1" fill="url(#bg2)"/><path d="M-3.1 0Q0 1.1 3.1 0" fill="none" stroke="#160e08" stroke-width="0.45"/></g><g transform="translate(92.0 37.9) rotate(176)"><ellipse rx="4.0" ry="2.6" fill="url(#bg2)"/><path d="M-3.0 0Q0 0.9 3.0 0" fill="none" stroke="#160e08" stroke-width="0.45"/></g><g transform="translate(105.5 21.7) rotate(45)"><ellipse rx="4.9" ry="3.3" fill="url(#bg2)"/><path d="M-3.6 0Q0 1.2 3.6 0" fill="none" stroke="#160e08" stroke-width="0.45"/></g><g transform="translate(99.9 23.3) rotate(0)"><ellipse rx="4.8" ry="3.5" fill="url(#bg2)"/><path d="M-3.6 0Q0 1.2 3.6 0" fill="none" stroke="#160e08" stroke-width="0.45"/></g><g transform="translate(116.5 58.3) rotate(156)"><ellipse rx="4.4" ry="3.2" fill="url(#bg2)"/><path d="M-3.3 0Q0 1.1 3.3 0" fill="none" stroke="#160e08" stroke-width="0.45"/></g><g transform="translate(113.3 75.6) rotate(141)"><ellipse rx="4.9" ry="3.5" fill="url(#bg2)"/><path d="M-3.7 0Q0 1.2 3.7 0" fill="none" stroke="#160e08" stroke-width="0.45"/></g><g transform="translate(119.5 31.9) rotate(43)"><ellipse rx="4.1" ry="3.1" fill="url(#bg2)"/><path d="M-3.1 0Q0 1.1 3.1 0" fill="none" stroke="#160e08" stroke-width="0.45"/></g><g transform="translate(125.7 80.5) rotate(16)"><ellipse rx="4.8" ry="3.4" fill="url(#bg2)"/><path d="M-3.6 0Q0 1.2 3.6 0" fill="none" stroke="#160e08" stroke-width="0.45"/></g><g transform="translate(102.3 84.0) rotate(103)"><ellipse rx="4.5" ry="3.1" fill="url(#bg2)"/><path d="M-3.3 0Q0 1.1 3.3 0" fill="none" stroke="#160e08" stroke-width="0.45"/></g><g transform="translate(112.0 42.4) rotate(134)"><ellipse rx="4.3" ry="3.0" fill="url(#bg2)"/><path d="M-3.2 0Q0 1.1 3.2 0" fill="none" stroke="#160e08" stroke-width="0.45"/></g><g transform="translate(96.9 79.0) rotate(37)"><ellipse rx="4.6" ry="3.4" fill="url(#bg2)"/><path d="M-3.5 0Q0 1.2 3.5 0" fill="none" stroke="#160e08" stroke-width="0.45"/></g><g transform="translate(115.5 11.5) rotate(178)"><ellipse rx="4.1" ry="3.1" fill="url(#bg2)"/><path d="M-3.1 0Q0 1.1 3.1 0" fill="none" stroke="#160e08" stroke-width="0.45"/></g><g transform="translate(111.1 9.3) rotate(115)"><ellipse rx="4.8" ry="3.7" fill="url(#bg2)"/><path d="M-3.6 0Q0 1.3 3.6 0" fill="none" stroke="#160e08" stroke-width="0.45"/></g><g transform="translate(107.2 81.0) rotate(150)"><ellipse rx="4.2" ry="2.8" fill="url(#bg2)"/><path d="M-3.2 0Q0 1.0 3.2 0" fill="none" stroke="#160e08" stroke-width="0.45"/></g><g transform="translate(117.7 33.2) rotate(133)"><ellipse rx="4.6" ry="3.4" fill="url(#bg2)"/><path d="M-3.5 0Q0 1.2 3.5 0" fill="none" stroke="#160e08" stroke-width="0.45"/></g><g transform="translate(119.5 56.8) rotate(6)"><ellipse rx="4.8" ry="3.3" fill="url(#bg2)"/><path d="M-3.6 0Q0 1.1 3.6 0" fill="none" stroke="#160e08" stroke-width="0.45"/></g></g><g clip-path="url(#cp3)"><rect x="134.3" y="3" width="41.7" height="81" fill="#120c0a"/><g transform="translate(171.2 32.0) rotate(140)"><ellipse rx="4.4" ry="2.9" fill="url(#bg3)"/><path d="M-3.3 0Q0 1.0 3.3 0" fill="none" stroke="#120c0a" stroke-width="0.45"/></g><g transform="translate(153.3 54.6) rotate(104)"><ellipse rx="4.6" ry="3.2" fill="url(#bg3)"/><path d="M-3.4 0Q0 1.1 3.4 0" fill="none" stroke="#120c0a" stroke-width="0.45"/></g><g transform="translate(171.0 56.2) rotate(70)"><ellipse rx="4.1" ry="3.2" fill="url(#bg3)"/><path d="M-3.1 0Q0 1.1 3.1 0" fill="none" stroke="#120c0a" stroke-width="0.45"/></g><g transform="translate(144.4 13.1) rotate(155)"><ellipse rx="4.2" ry="3.1" fill="url(#bg3)"/><path d="M-3.1 0Q0 1.1 3.1 0" fill="none" stroke="#120c0a" stroke-width="0.45"/></g><g transform="translate(163.0 81.8) rotate(91)"><ellipse rx="3.9" ry="2.7" fill="url(#bg3)"/><path d="M-2.9 0Q0 0.9 2.9 0" fill="none" stroke="#120c0a" stroke-width="0.45"/></g><g transform="translate(135.0 34.8) rotate(47)"><ellipse rx="4.5" ry="3.3" fill="url(#bg3)"/><path d="M-3.4 0Q0 1.1 3.4 0" fill="none" stroke="#120c0a" stroke-width="0.45"/></g><g transform="translate(157.4 66.3) rotate(132)"><ellipse rx="4.3" ry="3.1" fill="url(#bg3)"/><path d="M-3.2 0Q0 1.1 3.2 0" fill="none" stroke="#120c0a" stroke-width="0.45"/></g><g transform="translate(147.6 12.3) rotate(113)"><ellipse rx="4.0" ry="3.0" fill="url(#bg3)"/><path d="M-3.0 0Q0 1.0 3.0 0" fill="none" stroke="#120c0a" stroke-width="0.45"/></g><g transform="translate(175.6 77.7) rotate(91)"><ellipse rx="4.5" ry="3.3" fill="url(#bg3)"/><path d="M-3.4 0Q0 1.1 3.4 0" fill="none" stroke="#120c0a" stroke-width="0.45"/></g><g transform="translate(170.6 39.3) rotate(165)"><ellipse rx="3.9" ry="2.8" fill="url(#bg3)"/><path d="M-2.9 0Q0 1.0 2.9 0" fill="none" stroke="#120c0a" stroke-width="0.45"/></g><g transform="translate(165.3 22.6) rotate(83)"><ellipse rx="4.7" ry="3.2" fill="url(#bg3)"/><path d="M-3.5 0Q0 1.1 3.5 0" fill="none" stroke="#120c0a" stroke-width="0.45"/></g><g transform="translate(155.7 42.9) rotate(48)"><ellipse rx="4.4" ry="3.2" fill="url(#bg3)"/><path d="M-3.3 0Q0 1.1 3.3 0" fill="none" stroke="#120c0a" stroke-width="0.45"/></g><g transform="translate(171.5 45.4) rotate(130)"><ellipse rx="4.5" ry="3.1" fill="url(#bg3)"/><path d="M-3.3 0Q0 1.1 3.3 0" fill="none" stroke="#120c0a" stroke-width="0.45"/></g><g transform="translate(143.9 83.5) rotate(111)"><ellipse rx="4.7" ry="3.4" fill="url(#bg3)"/><path d="M-3.5 0Q0 1.2 3.5 0" fill="none" stroke="#120c0a" stroke-width="0.45"/></g><g transform="translate(173.5 75.4) rotate(173)"><ellipse rx="4.8" ry="3.6" fill="url(#bg3)"/><path d="M-3.6 0Q0 1.2 3.6 0" fill="none" stroke="#120c0a" stroke-width="0.45"/></g><g transform="translate(165.2 30.3) rotate(123)"><ellipse rx="4.0" ry="2.9" fill="url(#bg3)"/><path d="M-3.0 0Q0 1.0 3.0 0" fill="none" stroke="#120c0a" stroke-width="0.45"/></g><g transform="translate(149.2 30.4) rotate(98)"><ellipse rx="4.3" ry="3.3" fill="url(#bg3)"/><path d="M-3.2 0Q0 1.2 3.2 0" fill="none" stroke="#120c0a" stroke-width="0.45"/></g><g transform="translate(157.6 29.6) rotate(65)"><ellipse rx="4.1" ry="3.0" fill="url(#bg3)"/><path d="M-3.1 0Q0 1.1 3.1 0" fill="none" stroke="#120c0a" stroke-width="0.45"/></g><g transform="translate(162.6 58.5) rotate(168)"><ellipse rx="4.5" ry="3.2" fill="url(#bg3)"/><path d="M-3.4 0Q0 1.1 3.4 0" fill="none" stroke="#120c0a" stroke-width="0.45"/></g><g transform="translate(141.7 67.2) rotate(46)"><ellipse rx="4.0" ry="3.0" fill="url(#bg3)"/><path d="M-3.0 0Q0 1.0 3.0 0" fill="none" stroke="#120c0a" stroke-width="0.45"/></g><g transform="translate(145.6 19.2) rotate(151)"><ellipse rx="4.2" ry="3.0" fill="url(#bg3)"/><path d="M-3.1 0Q0 1.0 3.1 0" fill="none" stroke="#120c0a" stroke-width="0.45"/></g><g transform="translate(142.2 67.5) rotate(117)"><ellipse rx="4.8" ry="3.2" fill="url(#bg3)"/><path d="M-3.6 0Q0 1.1 3.6 0" fill="none" stroke="#120c0a" stroke-width="0.45"/></g><g transform="translate(160.8 63.0) rotate(106)"><ellipse rx="4.4" ry="2.9" fill="url(#bg3)"/><path d="M-3.3 0Q0 1.0 3.3 0" fill="none" stroke="#120c0a" stroke-width="0.45"/></g><g transform="translate(146.5 49.4) rotate(63)"><ellipse rx="4.8" ry="3.2" fill="url(#bg3)"/><path d="M-3.6 0Q0 1.1 3.6 0" fill="none" stroke="#120c0a" stroke-width="0.45"/></g><g transform="translate(150.6 46.3) rotate(155)"><ellipse rx="4.0" ry="3.0" fill="url(#bg3)"/><path d="M-3.0 0Q0 1.0 3.0 0" fill="none" stroke="#120c0a" stroke-width="0.45"/></g><g transform="translate(135.0 46.1) rotate(117)"><ellipse rx="4.8" ry="3.4" fill="url(#bg3)"/><path d="M-3.6 0Q0 1.2 3.6 0" fill="none" stroke="#120c0a" stroke-width="0.45"/></g><g transform="translate(135.7 71.1) rotate(115)"><ellipse rx="4.3" ry="3.0" fill="url(#bg3)"/><path d="M-3.2 0Q0 1.1 3.2 0" fill="none" stroke="#120c0a" stroke-width="0.45"/></g><g transform="translate(148.6 70.0) rotate(97)"><ellipse rx="4.1" ry="2.8" fill="url(#bg3)"/><path d="M-3.1 0Q0 1.0 3.1 0" fill="none" stroke="#120c0a" stroke-width="0.45"/></g><g transform="translate(173.6 61.9) rotate(51)"><ellipse rx="4.2" ry="3.0" fill="url(#bg3)"/><path d="M-3.2 0Q0 1.1 3.2 0" fill="none" stroke="#120c0a" stroke-width="0.45"/></g><g transform="translate(165.2 18.7) rotate(79)"><ellipse rx="4.3" ry="3.0" fill="url(#bg3)"/><path d="M-3.2 0Q0 1.0 3.2 0" fill="none" stroke="#120c0a" stroke-width="0.45"/></g><g transform="translate(145.8 60.7) rotate(164)"><ellipse rx="4.8" ry="3.4" fill="url(#bg3)"/><path d="M-3.6 0Q0 1.2 3.6 0" fill="none" stroke="#120c0a" stroke-width="0.45"/></g><g transform="translate(174.7 54.7) rotate(97)"><ellipse rx="4.1" ry="2.8" fill="url(#bg3)"/><path d="M-3.0 0Q0 1.0 3.0 0" fill="none" stroke="#120c0a" stroke-width="0.45"/></g><g transform="translate(156.5 12.1) rotate(17)"><ellipse rx="4.3" ry="3.0" fill="url(#bg3)"/><path d="M-3.2 0Q0 1.0 3.2 0" fill="none" stroke="#120c0a" stroke-width="0.45"/></g><g transform="translate(170.8 82.1) rotate(13)"><ellipse rx="4.9" ry="3.6" fill="url(#bg3)"/><path d="M-3.6 0Q0 1.3 3.6 0" fill="none" stroke="#120c0a" stroke-width="0.45"/></g><g transform="translate(170.5 66.9) rotate(50)"><ellipse rx="4.5" ry="3.2" fill="url(#bg3)"/><path d="M-3.4 0Q0 1.1 3.4 0" fill="none" stroke="#120c0a" stroke-width="0.45"/></g><g transform="translate(159.9 35.3) rotate(167)"><ellipse rx="4.9" ry="3.6" fill="url(#bg3)"/><path d="M-3.6 0Q0 1.3 3.6 0" fill="none" stroke="#120c0a" stroke-width="0.45"/></g><g transform="translate(137.8 23.4) rotate(15)"><ellipse rx="4.6" ry="3.5" fill="url(#bg3)"/><path d="M-3.4 0Q0 1.2 3.4 0" fill="none" stroke="#120c0a" stroke-width="0.45"/></g><g transform="translate(152.1 48.0) rotate(96)"><ellipse rx="4.0" ry="3.0" fill="url(#bg3)"/><path d="M-3.0 0Q0 1.0 3.0 0" fill="none" stroke="#120c0a" stroke-width="0.45"/></g><g transform="translate(140.2 53.4) rotate(80)"><ellipse rx="4.9" ry="3.8" fill="url(#bg3)"/><path d="M-3.6 0Q0 1.3 3.6 0" fill="none" stroke="#120c0a" stroke-width="0.45"/></g><g transform="translate(147.6 33.0) rotate(41)"><ellipse rx="4.5" ry="3.0" fill="url(#bg3)"/><path d="M-3.4 0Q0 1.1 3.4 0" fill="none" stroke="#120c0a" stroke-width="0.45"/></g><g transform="translate(158.5 22.3) rotate(56)"><ellipse rx="4.0" ry="3.0" fill="url(#bg3)"/><path d="M-3.0 0Q0 1.0 3.0 0" fill="none" stroke="#120c0a" stroke-width="0.45"/></g><g transform="translate(159.5 22.7) rotate(131)"><ellipse rx="4.3" ry="3.3" fill="url(#bg3)"/><path d="M-3.2 0Q0 1.2 3.2 0" fill="none" stroke="#120c0a" stroke-width="0.45"/></g><g transform="translate(171.7 50.9) rotate(26)"><ellipse rx="3.9" ry="2.7" fill="url(#bg3)"/><path d="M-2.9 0Q0 0.9 2.9 0" fill="none" stroke="#120c0a" stroke-width="0.45"/></g><g transform="translate(148.6 61.8) rotate(158)"><ellipse rx="4.1" ry="2.7" fill="url(#bg3)"/><path d="M-3.0 0Q0 1.0 3.0 0" fill="none" stroke="#120c0a" stroke-width="0.45"/></g><g transform="translate(155.1 78.8) rotate(28)"><ellipse rx="4.6" ry="3.4" fill="url(#bg3)"/><path d="M-3.5 0Q0 1.2 3.5 0" fill="none" stroke="#120c0a" stroke-width="0.45"/></g><g transform="translate(158.4 32.5) rotate(177)"><ellipse rx="4.2" ry="2.9" fill="url(#bg3)"/><path d="M-3.2 0Q0 1.0 3.2 0" fill="none" stroke="#120c0a" stroke-width="0.45"/></g><g transform="translate(149.8 5.0) rotate(127)"><ellipse rx="4.2" ry="2.8" fill="url(#bg3)"/><path d="M-3.1 0Q0 1.0 3.1 0" fill="none" stroke="#120c0a" stroke-width="0.45"/></g><g transform="translate(142.2 18.3) rotate(100)"><ellipse rx="4.3" ry="2.9" fill="url(#bg3)"/><path d="M-3.2 0Q0 1.0 3.2 0" fill="none" stroke="#120c0a" stroke-width="0.45"/></g><g transform="translate(149.2 80.4) rotate(72)"><ellipse rx="4.9" ry="3.4" fill="url(#bg3)"/><path d="M-3.7 0Q0 1.2 3.7 0" fill="none" stroke="#120c0a" stroke-width="0.45"/></g><g transform="translate(135.2 4.3) rotate(149)"><ellipse rx="4.8" ry="3.6" fill="url(#bg3)"/><path d="M-3.6 0Q0 1.3 3.6 0" fill="none" stroke="#120c0a" stroke-width="0.45"/></g><g transform="translate(142.7 55.1) rotate(89)"><ellipse rx="4.8" ry="3.3" fill="url(#bg3)"/><path d="M-3.6 0Q0 1.1 3.6 0" fill="none" stroke="#120c0a" stroke-width="0.45"/></g><g transform="translate(145.8 71.5) rotate(139)"><ellipse rx="4.2" ry="3.0" fill="url(#bg3)"/><path d="M-3.2 0Q0 1.0 3.2 0" fill="none" stroke="#120c0a" stroke-width="0.45"/></g><g transform="translate(148.7 28.8) rotate(28)"><ellipse rx="4.9" ry="3.5" fill="url(#bg3)"/><path d="M-3.6 0Q0 1.2 3.6 0" fill="none" stroke="#120c0a" stroke-width="0.45"/></g><g transform="translate(172.8 36.3) rotate(11)"><ellipse rx="4.4" ry="3.0" fill="url(#bg3)"/><path d="M-3.3 0Q0 1.0 3.3 0" fill="none" stroke="#120c0a" stroke-width="0.45"/></g><g transform="translate(135.9 26.4) rotate(175)"><ellipse rx="4.3" ry="3.3" fill="url(#bg3)"/><path d="M-3.2 0Q0 1.2 3.2 0" fill="none" stroke="#120c0a" stroke-width="0.45"/></g><g transform="translate(167.5 47.4) rotate(152)"><ellipse rx="4.7" ry="3.2" fill="url(#bg3)"/><path d="M-3.5 0Q0 1.1 3.5 0" fill="none" stroke="#120c0a" stroke-width="0.45"/></g><g transform="translate(164.1 63.8) rotate(51)"><ellipse rx="4.4" ry="3.2" fill="url(#bg3)"/><path d="M-3.3 0Q0 1.1 3.3 0" fill="none" stroke="#120c0a" stroke-width="0.45"/></g><g transform="translate(157.1 7.5) rotate(157)"><ellipse rx="4.1" ry="2.9" fill="url(#bg3)"/><path d="M-3.1 0Q0 1.0 3.1 0" fill="none" stroke="#120c0a" stroke-width="0.45"/></g><g transform="translate(167.3 54.0) rotate(44)"><ellipse rx="4.5" ry="3.1" fill="url(#bg3)"/><path d="M-3.4 0Q0 1.1 3.4 0" fill="none" stroke="#120c0a" stroke-width="0.45"/></g><g transform="translate(152.4 40.1) rotate(169)"><ellipse rx="4.6" ry="3.5" fill="url(#bg3)"/><path d="M-3.4 0Q0 1.2 3.4 0" fill="none" stroke="#120c0a" stroke-width="0.45"/></g><g transform="translate(164.5 29.5) rotate(92)"><ellipse rx="4.1" ry="2.8" fill="url(#bg3)"/><path d="M-3.1 0Q0 1.0 3.1 0" fill="none" stroke="#120c0a" stroke-width="0.45"/></g><g transform="translate(166.4 39.3) rotate(76)"><ellipse rx="4.1" ry="2.8" fill="url(#bg3)"/><path d="M-3.1 0Q0 1.0 3.1 0" fill="none" stroke="#120c0a" stroke-width="0.45"/></g><g transform="translate(162.9 8.6) rotate(36)"><ellipse rx="4.7" ry="3.4" fill="url(#bg3)"/><path d="M-3.6 0Q0 1.2 3.6 0" fill="none" stroke="#120c0a" stroke-width="0.45"/></g><g transform="translate(175.2 51.4) rotate(109)"><ellipse rx="4.0" ry="2.7" fill="url(#bg3)"/><path d="M-3.0 0Q0 1.0 3.0 0" fill="none" stroke="#120c0a" stroke-width="0.45"/></g><g transform="translate(161.5 19.8) rotate(91)"><ellipse rx="4.1" ry="2.8" fill="url(#bg3)"/><path d="M-3.1 0Q0 1.0 3.1 0" fill="none" stroke="#120c0a" stroke-width="0.45"/></g><g transform="translate(152.0 81.6) rotate(149)"><ellipse rx="4.4" ry="3.4" fill="url(#bg3)"/><path d="M-3.3 0Q0 1.2 3.3 0" fill="none" stroke="#120c0a" stroke-width="0.45"/></g><g transform="translate(147.7 24.1) rotate(78)"><ellipse rx="4.7" ry="3.5" fill="url(#bg3)"/><path d="M-3.5 0Q0 1.2 3.5 0" fill="none" stroke="#120c0a" stroke-width="0.45"/></g><g transform="translate(136.9 76.3) rotate(164)"><ellipse rx="4.1" ry="3.2" fill="url(#bg3)"/><path d="M-3.1 0Q0 1.1 3.1 0" fill="none" stroke="#120c0a" stroke-width="0.45"/></g><g transform="translate(135.8 50.9) rotate(45)"><ellipse rx="4.7" ry="3.2" fill="url(#bg3)"/><path d="M-3.5 0Q0 1.1 3.5 0" fill="none" stroke="#120c0a" stroke-width="0.45"/></g><g transform="translate(142.4 11.9) rotate(48)"><ellipse rx="4.4" ry="3.2" fill="url(#bg3)"/><path d="M-3.3 0Q0 1.1 3.3 0" fill="none" stroke="#120c0a" stroke-width="0.45"/></g><g transform="translate(164.3 76.8) rotate(52)"><ellipse rx="4.6" ry="3.1" fill="url(#bg3)"/><path d="M-3.4 0Q0 1.1 3.4 0" fill="none" stroke="#120c0a" stroke-width="0.45"/></g><g transform="translate(175.4 68.2) rotate(69)"><ellipse rx="4.6" ry="3.0" fill="url(#bg3)"/><path d="M-3.4 0Q0 1.1 3.4 0" fill="none" stroke="#120c0a" stroke-width="0.45"/></g><g transform="translate(137.7 33.9) rotate(31)"><ellipse rx="4.5" ry="3.5" fill="url(#bg3)"/><path d="M-3.4 0Q0 1.2 3.4 0" fill="none" stroke="#120c0a" stroke-width="0.45"/></g><g transform="translate(143.6 16.4) rotate(115)"><ellipse rx="4.8" ry="3.5" fill="url(#bg3)"/><path d="M-3.6 0Q0 1.2 3.6 0" fill="none" stroke="#120c0a" stroke-width="0.45"/></g><g transform="translate(150.4 14.7) rotate(96)"><ellipse rx="4.6" ry="3.6" fill="url(#bg3)"/><path d="M-3.4 0Q0 1.3 3.4 0" fill="none" stroke="#120c0a" stroke-width="0.45"/></g><g transform="translate(170.4 67.7) rotate(140)"><ellipse rx="4.5" ry="3.3" fill="url(#bg3)"/><path d="M-3.4 0Q0 1.1 3.4 0" fill="none" stroke="#120c0a" stroke-width="0.45"/></g><g transform="translate(145.0 35.4) rotate(12)"><ellipse rx="4.4" ry="2.9" fill="url(#bg3)"/><path d="M-3.3 0Q0 1.0 3.3 0" fill="none" stroke="#120c0a" stroke-width="0.45"/></g><g transform="translate(171.8 15.6) rotate(144)"><ellipse rx="4.6" ry="3.6" fill="url(#bg3)"/><path d="M-3.4 0Q0 1.2 3.4 0" fill="none" stroke="#120c0a" stroke-width="0.45"/></g><g transform="translate(171.9 63.1) rotate(55)"><ellipse rx="4.8" ry="3.7" fill="url(#bg3)"/><path d="M-3.6 0Q0 1.3 3.6 0" fill="none" stroke="#120c0a" stroke-width="0.45"/></g><g transform="translate(170.8 10.2) rotate(103)"><ellipse rx="4.4" ry="3.0" fill="url(#bg3)"/><path d="M-3.3 0Q0 1.1 3.3 0" fill="none" stroke="#120c0a" stroke-width="0.45"/></g><g transform="translate(164.7 67.9) rotate(2)"><ellipse rx="4.7" ry="3.4" fill="url(#bg3)"/><path d="M-3.5 0Q0 1.2 3.5 0" fill="none" stroke="#120c0a" stroke-width="0.45"/></g><g transform="translate(165.2 73.6) rotate(135)"><ellipse rx="4.3" ry="2.9" fill="url(#bg3)"/><path d="M-3.2 0Q0 1.0 3.2 0" fill="none" stroke="#120c0a" stroke-width="0.45"/></g><g transform="translate(156.6 30.2) rotate(84)"><ellipse rx="4.5" ry="3.1" fill="url(#bg3)"/><path d="M-3.3 0Q0 1.1 3.3 0" fill="none" stroke="#120c0a" stroke-width="0.45"/></g><g transform="translate(156.8 3.3) rotate(93)"><ellipse rx="4.4" ry="3.1" fill="url(#bg3)"/><path d="M-3.3 0Q0 1.1 3.3 0" fill="none" stroke="#120c0a" stroke-width="0.45"/></g><g transform="translate(137.5 81.8) rotate(24)"><ellipse rx="4.3" ry="3.0" fill="url(#bg3)"/><path d="M-3.3 0Q0 1.0 3.3 0" fill="none" stroke="#120c0a" stroke-width="0.45"/></g><g transform="translate(137.7 63.9) rotate(123)"><ellipse rx="4.5" ry="3.4" fill="url(#bg3)"/><path d="M-3.4 0Q0 1.2 3.4 0" fill="none" stroke="#120c0a" stroke-width="0.45"/></g><g transform="translate(161.0 74.0) rotate(113)"><ellipse rx="4.0" ry="2.8" fill="url(#bg3)"/><path d="M-3.0 0Q0 1.0 3.0 0" fill="none" stroke="#120c0a" stroke-width="0.45"/></g><g transform="translate(174.4 27.7) rotate(91)"><ellipse rx="4.1" ry="3.0" fill="url(#bg3)"/><path d="M-3.1 0Q0 1.1 3.1 0" fill="none" stroke="#120c0a" stroke-width="0.45"/></g><g transform="translate(170.4 27.6) rotate(54)"><ellipse rx="4.1" ry="3.0" fill="url(#bg3)"/><path d="M-3.1 0Q0 1.0 3.1 0" fill="none" stroke="#120c0a" stroke-width="0.45"/></g><g transform="translate(151.7 11.0) rotate(53)"><ellipse rx="4.2" ry="2.9" fill="url(#bg3)"/><path d="M-3.2 0Q0 1.0 3.2 0" fill="none" stroke="#120c0a" stroke-width="0.45"/></g><g transform="translate(150.8 35.6) rotate(6)"><ellipse rx="4.0" ry="2.8" fill="url(#bg3)"/><path d="M-3.0 0Q0 1.0 3.0 0" fill="none" stroke="#120c0a" stroke-width="0.45"/></g><g transform="translate(138.6 10.0) rotate(22)"><ellipse rx="4.0" ry="2.8" fill="url(#bg3)"/><path d="M-3.0 0Q0 1.0 3.0 0" fill="none" stroke="#120c0a" stroke-width="0.45"/></g><g transform="translate(166.1 36.8) rotate(145)"><ellipse rx="4.4" ry="3.4" fill="url(#bg3)"/><path d="M-3.3 0Q0 1.2 3.3 0" fill="none" stroke="#120c0a" stroke-width="0.45"/></g><g transform="translate(154.0 17.9) rotate(109)"><ellipse rx="4.6" ry="3.6" fill="url(#bg3)"/><path d="M-3.5 0Q0 1.2 3.5 0" fill="none" stroke="#120c0a" stroke-width="0.45"/></g><g transform="translate(137.2 42.4) rotate(80)"><ellipse rx="4.7" ry="3.5" fill="url(#bg3)"/><path d="M-3.5 0Q0 1.2 3.5 0" fill="none" stroke="#120c0a" stroke-width="0.45"/></g><g transform="translate(144.0 64.9) rotate(155)"><ellipse rx="4.7" ry="3.5" fill="url(#bg3)"/><path d="M-3.5 0Q0 1.2 3.5 0" fill="none" stroke="#120c0a" stroke-width="0.45"/></g><g transform="translate(145.8 44.9) rotate(20)"><ellipse rx="4.9" ry="3.7" fill="url(#bg3)"/><path d="M-3.6 0Q0 1.3 3.6 0" fill="none" stroke="#120c0a" stroke-width="0.45"/></g><g transform="translate(166.7 22.9) rotate(103)"><ellipse rx="4.0" ry="2.7" fill="url(#bg3)"/><path d="M-3.0 0Q0 1.0 3.0 0" fill="none" stroke="#120c0a" stroke-width="0.45"/></g><g transform="translate(174.7 46.6) rotate(19)"><ellipse rx="4.5" ry="3.3" fill="url(#bg3)"/><path d="M-3.4 0Q0 1.2 3.4 0" fill="none" stroke="#120c0a" stroke-width="0.45"/></g><g transform="translate(145.5 42.6) rotate(89)"><ellipse rx="4.2" ry="3.0" fill="url(#bg3)"/><path d="M-3.2 0Q0 1.1 3.2 0" fill="none" stroke="#120c0a" stroke-width="0.45"/></g><g transform="translate(161.6 73.7) rotate(38)"><ellipse rx="4.3" ry="3.3" fill="url(#bg3)"/><path d="M-3.2 0Q0 1.2 3.2 0" fill="none" stroke="#120c0a" stroke-width="0.45"/></g><g transform="translate(167.0 14.5) rotate(120)"><ellipse rx="4.2" ry="3.1" fill="url(#bg3)"/><path d="M-3.2 0Q0 1.1 3.2 0" fill="none" stroke="#120c0a" stroke-width="0.45"/></g><g transform="translate(167.9 5.7) rotate(59)"><ellipse rx="4.7" ry="3.2" fill="url(#bg3)"/><path d="M-3.5 0Q0 1.1 3.5 0" fill="none" stroke="#120c0a" stroke-width="0.45"/></g><g transform="translate(159.3 54.1) rotate(7)"><ellipse rx="4.6" ry="3.2" fill="url(#bg3)"/><path d="M-3.4 0Q0 1.1 3.4 0" fill="none" stroke="#120c0a" stroke-width="0.45"/></g><g transform="translate(161.3 11.3) rotate(99)"><ellipse rx="4.0" ry="2.8" fill="url(#bg3)"/><path d="M-3.0 0Q0 1.0 3.0 0" fill="none" stroke="#120c0a" stroke-width="0.45"/></g><g transform="translate(170.0 6.2) rotate(97)"><ellipse rx="4.5" ry="3.3" fill="url(#bg3)"/><path d="M-3.4 0Q0 1.1 3.4 0" fill="none" stroke="#120c0a" stroke-width="0.45"/></g><g transform="translate(175.0 17.9) rotate(38)"><ellipse rx="4.4" ry="3.4" fill="url(#bg3)"/><path d="M-3.3 0Q0 1.2 3.3 0" fill="none" stroke="#120c0a" stroke-width="0.45"/></g><g transform="translate(151.7 49.7) rotate(86)"><ellipse rx="4.6" ry="3.3" fill="url(#bg3)"/><path d="M-3.4 0Q0 1.2 3.4 0" fill="none" stroke="#120c0a" stroke-width="0.45"/></g><g transform="translate(138.7 21.5) rotate(127)"><ellipse rx="4.6" ry="3.3" fill="url(#bg3)"/><path d="M-3.4 0Q0 1.1 3.4 0" fill="none" stroke="#120c0a" stroke-width="0.45"/></g><g transform="translate(157.8 45.0) rotate(105)"><ellipse rx="4.8" ry="3.4" fill="url(#bg3)"/><path d="M-3.6 0Q0 1.2 3.6 0" fill="none" stroke="#120c0a" stroke-width="0.45"/></g><g transform="translate(151.6 56.0) rotate(77)"><ellipse rx="4.5" ry="3.2" fill="url(#bg3)"/><path d="M-3.4 0Q0 1.1 3.4 0" fill="none" stroke="#120c0a" stroke-width="0.45"/></g><g transform="translate(151.2 65.4) rotate(1)"><ellipse rx="4.8" ry="3.2" fill="url(#bg3)"/><path d="M-3.6 0Q0 1.1 3.6 0" fill="none" stroke="#120c0a" stroke-width="0.45"/></g><g transform="translate(135.0 59.2) rotate(16)"><ellipse rx="4.7" ry="3.6" fill="url(#bg3)"/><path d="M-3.6 0Q0 1.3 3.6 0" fill="none" stroke="#120c0a" stroke-width="0.45"/></g><g transform="translate(161.5 68.8) rotate(97)"><ellipse rx="4.2" ry="3.2" fill="url(#bg3)"/><path d="M-3.1 0Q0 1.1 3.1 0" fill="none" stroke="#120c0a" stroke-width="0.45"/></g><g transform="translate(171.3 55.2) rotate(5)"><ellipse rx="4.2" ry="3.3" fill="url(#bg3)"/><path d="M-3.2 0Q0 1.2 3.2 0" fill="none" stroke="#120c0a" stroke-width="0.45"/></g><g transform="translate(147.3 17.4) rotate(91)"><ellipse rx="4.7" ry="3.5" fill="url(#bg3)"/><path d="M-3.5 0Q0 1.2 3.5 0" fill="none" stroke="#120c0a" stroke-width="0.45"/></g><g transform="translate(158.9 50.7) rotate(175)"><ellipse rx="4.9" ry="3.7" fill="url(#bg3)"/><path d="M-3.6 0Q0 1.3 3.6 0" fill="none" stroke="#120c0a" stroke-width="0.45"/></g><g transform="translate(134.6 58.4) rotate(95)"><ellipse rx="4.6" ry="3.1" fill="url(#bg3)"/><path d="M-3.4 0Q0 1.1 3.4 0" fill="none" stroke="#120c0a" stroke-width="0.45"/></g><g transform="translate(164.1 67.1) rotate(99)"><ellipse rx="4.5" ry="3.4" fill="url(#bg3)"/><path d="M-3.3 0Q0 1.2 3.3 0" fill="none" stroke="#120c0a" stroke-width="0.45"/></g><g transform="translate(150.7 22.7) rotate(40)"><ellipse rx="4.8" ry="3.5" fill="url(#bg3)"/><path d="M-3.6 0Q0 1.2 3.6 0" fill="none" stroke="#120c0a" stroke-width="0.45"/></g><g transform="translate(169.7 17.6) rotate(40)"><ellipse rx="4.3" ry="2.8" fill="url(#bg3)"/><path d="M-3.2 0Q0 1.0 3.2 0" fill="none" stroke="#120c0a" stroke-width="0.45"/></g><g transform="translate(173.1 60.3) rotate(11)"><ellipse rx="4.0" ry="3.0" fill="url(#bg3)"/><path d="M-3.0 0Q0 1.1 3.0 0" fill="none" stroke="#120c0a" stroke-width="0.45"/></g><g transform="translate(153.0 83.2) rotate(61)"><ellipse rx="4.6" ry="3.4" fill="url(#bg3)"/><path d="M-3.4 0Q0 1.2 3.4 0" fill="none" stroke="#120c0a" stroke-width="0.45"/></g><g transform="translate(162.7 62.3) rotate(80)"><ellipse rx="4.1" ry="2.9" fill="url(#bg3)"/><path d="M-3.1 0Q0 1.0 3.1 0" fill="none" stroke="#120c0a" stroke-width="0.45"/></g><g transform="translate(159.8 61.0) rotate(147)"><ellipse rx="4.7" ry="3.2" fill="url(#bg3)"/><path d="M-3.5 0Q0 1.1 3.5 0" fill="none" stroke="#120c0a" stroke-width="0.45"/></g><g transform="translate(163.9 8.6) rotate(68)"><ellipse rx="4.8" ry="3.3" fill="url(#bg3)"/><path d="M-3.6 0Q0 1.2 3.6 0" fill="none" stroke="#120c0a" stroke-width="0.45"/></g><g transform="translate(136.8 18.5) rotate(151)"><ellipse rx="4.4" ry="2.9" fill="url(#bg3)"/><path d="M-3.3 0Q0 1.0 3.3 0" fill="none" stroke="#120c0a" stroke-width="0.45"/></g><g transform="translate(160.8 76.4) rotate(16)"><ellipse rx="3.9" ry="2.8" fill="url(#bg3)"/><path d="M-3.0 0Q0 1.0 3.0 0" fill="none" stroke="#120c0a" stroke-width="0.45"/></g><g transform="translate(139.5 67.1) rotate(168)"><ellipse rx="4.0" ry="3.1" fill="url(#bg3)"/><path d="M-3.0 0Q0 1.1 3.0 0" fill="none" stroke="#120c0a" stroke-width="0.45"/></g><g transform="translate(170.9 74.0) rotate(62)"><ellipse rx="4.0" ry="2.8" fill="url(#bg3)"/><path d="M-3.0 0Q0 1.0 3.0 0" fill="none" stroke="#120c0a" stroke-width="0.45"/></g><g transform="translate(152.0 74.3) rotate(153)"><ellipse rx="4.4" ry="3.0" fill="url(#bg3)"/><path d="M-3.3 0Q0 1.0 3.3 0" fill="none" stroke="#120c0a" stroke-width="0.45"/></g><g transform="translate(145.7 10.5) rotate(40)"><ellipse rx="4.2" ry="3.3" fill="url(#bg3)"/><path d="M-3.2 0Q0 1.1 3.2 0" fill="none" stroke="#120c0a" stroke-width="0.45"/></g><g transform="translate(170.4 21.3) rotate(14)"><ellipse rx="4.4" ry="3.3" fill="url(#bg3)"/><path d="M-3.3 0Q0 1.2 3.3 0" fill="none" stroke="#120c0a" stroke-width="0.45"/></g><g transform="translate(138.4 16.3) rotate(16)"><ellipse rx="4.5" ry="3.1" fill="url(#bg3)"/><path d="M-3.4 0Q0 1.1 3.4 0" fill="none" stroke="#120c0a" stroke-width="0.45"/></g><g transform="translate(164.4 50.8) rotate(6)"><ellipse rx="4.3" ry="3.3" fill="url(#bg3)"/><path d="M-3.2 0Q0 1.1 3.2 0" fill="none" stroke="#120c0a" stroke-width="0.45"/></g><g transform="translate(146.7 27.8) rotate(145)"><ellipse rx="4.2" ry="3.2" fill="url(#bg3)"/><path d="M-3.1 0Q0 1.1 3.1 0" fill="none" stroke="#120c0a" stroke-width="0.45"/></g><g transform="translate(150.5 55.5) rotate(154)"><ellipse rx="4.3" ry="2.9" fill="url(#bg3)"/><path d="M-3.2 0Q0 1.0 3.2 0" fill="none" stroke="#120c0a" stroke-width="0.45"/></g><g transform="translate(159.9 4.0) rotate(73)"><ellipse rx="4.3" ry="3.1" fill="url(#bg3)"/><path d="M-3.2 0Q0 1.1 3.2 0" fill="none" stroke="#120c0a" stroke-width="0.45"/></g><g transform="translate(157.8 83.5) rotate(90)"><ellipse rx="4.5" ry="3.2" fill="url(#bg3)"/><path d="M-3.4 0Q0 1.1 3.4 0" fill="none" stroke="#120c0a" stroke-width="0.45"/></g><g transform="translate(156.0 14.6) rotate(49)"><ellipse rx="4.7" ry="3.3" fill="url(#bg3)"/><path d="M-3.5 0Q0 1.1 3.5 0" fill="none" stroke="#120c0a" stroke-width="0.45"/></g><g transform="translate(142.9 5.9) rotate(97)"><ellipse rx="4.2" ry="3.2" fill="url(#bg3)"/><path d="M-3.1 0Q0 1.1 3.1 0" fill="none" stroke="#120c0a" stroke-width="0.45"/></g><g transform="translate(164.4 77.9) rotate(8)"><ellipse rx="4.3" ry="3.1" fill="url(#bg3)"/><path d="M-3.2 0Q0 1.1 3.2 0" fill="none" stroke="#120c0a" stroke-width="0.45"/></g><g transform="translate(159.3 64.0) rotate(17)"><ellipse rx="4.5" ry="3.4" fill="url(#bg3)"/><path d="M-3.4 0Q0 1.2 3.4 0" fill="none" stroke="#120c0a" stroke-width="0.45"/></g><g transform="translate(154.8 78.5) rotate(136)"><ellipse rx="4.5" ry="3.0" fill="url(#bg3)"/><path d="M-3.4 0Q0 1.0 3.4 0" fill="none" stroke="#120c0a" stroke-width="0.45"/></g><g transform="translate(139.4 28.1) rotate(145)"><ellipse rx="4.1" ry="2.8" fill="url(#bg3)"/><path d="M-3.0 0Q0 1.0 3.0 0" fill="none" stroke="#120c0a" stroke-width="0.45"/></g><g transform="translate(153.2 60.3) rotate(5)"><ellipse rx="4.5" ry="3.4" fill="url(#bg3)"/><path d="M-3.4 0Q0 1.2 3.4 0" fill="none" stroke="#120c0a" stroke-width="0.45"/></g><g transform="translate(144.4 77.6) rotate(29)"><ellipse rx="3.9" ry="2.8" fill="url(#bg3)"/><path d="M-2.9 0Q0 1.0 2.9 0" fill="none" stroke="#120c0a" stroke-width="0.45"/></g><g transform="translate(134.8 51.9) rotate(150)"><ellipse rx="4.3" ry="3.1" fill="url(#bg3)"/><path d="M-3.2 0Q0 1.1 3.2 0" fill="none" stroke="#120c0a" stroke-width="0.45"/></g></g></symbol></svg>

<!-- top band -->
<div class="a" style="left:0;top:0;width:1024px;height:2px;background:#e2e2e6"></div>

<div class="t" style="left:10px;top:6px;font-size:18px;color:#2b2b33;-webkit-text-stroke:0.15px #2b2b33">Edit Article</div>
<div class="t" style="left:10px;top:41.2px;font-size:9.75px;color:#4a4a55">Do you need help creating a knowledge article? <span style="color:#4a5ea8;text-decoration:underline">Learn how to create one.</span></div>

<!-- buttons -->
<div class="btn" style="left:752px;top:16px;width:52px;height:22px;background:#e3e7f8"></div>
<div class="t" style="left:766px;top:23px;font-size:9px;font-weight:bold;color:#3a4c98">Close</div>
<div class="btn" style="left:814px;top:16px;width:90px;height:22px;background:#c6cde6"></div>
<div class="a" style="left:880px;top:16px;width:1px;height:22px;background:#e6e9f3"></div>
<div class="t" style="left:836px;top:23px;font-size:9px;font-weight:bold;color:#fff">Save</div>
<svg class="a" style="left:887px;top:23px" width="9" height="7" viewBox="0 0 9 7"><path d="M1 2 L4.5 5 L8 2" fill="none" stroke="#fff" stroke-width="1"/></svg>
<div class="btn" style="left:914px;top:16px;width:90px;height:22px;background:#c6cde6"></div>
<div class="a" style="left:981px;top:16px;width:1px;height:22px;background:#e6e9f3"></div>
<div class="t" style="left:931px;top:23px;font-size:9px;font-weight:bold;color:#fff">Publish</div>
<svg class="a" style="left:988px;top:23px" width="9" height="7" viewBox="0 0 9 7"><path d="M1 2 L4.5 5 L8 2" fill="none" stroke="#fff" stroke-width="1"/></svg>

<!-- Card 1 -->
<div class="card" style="left:11px;top:74px;width:705px;height:269px"></div>
<div class="t" style="left:28px;top:91px;font-size:14px;letter-spacing:-0.22px;color:#3a3a44">Set up the Article</div>
<div class="t" style="left:126px;top:130px;font-size:9.2px;color:#3a3a44">Details</div>
<div class="t" style="left:339px;top:130px;font-size:9.2px;color:#3a3a44">Phrasings(0)</div>
<div class="t" style="left:568px;top:130px;font-size:9.2px;color:#3a3a44">Revisions</div>
<div class="a" style="left:28px;top:148px;width:670px;height:2px;background:#e6e7ed"></div>
<div class="a" style="left:28px;top:147px;width:224px;height:1px;background:#4f5e98"></div><div class="a" style="left:28px;top:148px;width:224px;height:1px;background:#a7b0d0"></div>

<div class="t lbl" style="left:28px;top:163px">Title <span style="color:#e0522e">*</span></div>
<svg class="a" style="left:55.5px;top:163px" width="8.5" height="8.5" viewBox="0 0 8.5 8.5"><circle cx="4.25" cy="4.25" r="3.80" fill="none" stroke="#3a3a4a" stroke-width="0.9"/><path d="M4.25 3.65V6.46" stroke="#3a3a4a" stroke-width="0.9"/><circle cx="4.25" cy="2.38" r="0.54" fill="#3a3a4a"/></svg>
<div class="inp" style="left:28px;top:176px;width:318px;height:23px"></div>
<div class="t" style="left:39px;top:184px;font-size:9.1px;color:#50505a">Coffee roasts</div>
<svg class="a" style="left:326px;top:183px" width="9" height="9" viewBox="0 0 9 9"><path d="M1 1L8 8M8 1L1 8" stroke="#4a4a55" stroke-width="1.1"/></svg>

<div class="t lbl" style="left:28px;top:219.4px">Category</div>
<div class="inp" style="left:28px;top:233px;width:318px;height:23px"></div>
<div class="t" style="left:37.5px;top:239.6px;font-size:9px;color:#62626c">Brewing guides</div>
<svg class="a" style="left:326px;top:240px" width="9" height="7" viewBox="0 0 9 7"><path d="M1 2 L4.5 5.5 L8 2" fill="none" stroke="#555" stroke-width="1"/></svg>

<div class="t lbl" style="left:28px;top:269px">Labels</div>
<div class="inp" style="left:28px;top:282px;width:318px;height:23px"></div>
<div class="t" style="left:37.5px;top:288.6px;font-size:9px;color:#62626c">beans</div>
<div class="a" style="left:289px;top:287px;width:34px;height:13px;border-radius:7px;background:#dfe2ea"></div>
<div class="t" style="left:296.5px;top:288.5px;font-size:10px;font-weight:bold;color:#33333d">1</div>
<svg class="a" style="left:306px;top:289px" width="9" height="9" viewBox="0 0 9 9"><path d="M1 1L8 8M8 1L1 8" stroke="#2f2f3a" stroke-width="1.2"/></svg>
<svg class="a" style="left:326px;top:290px" width="9" height="7" viewBox="0 0 9 7"><path d="M1 2 L4.5 5.5 L8 2" fill="none" stroke="#555" stroke-width="1"/></svg>
<div class="a" style="left:28px;top:308px;width:54px;height:14px;border-radius:7px;background:#1f3270"></div>
<div class="t" style="left:37px;top:311px;font-size:8.6px;font-weight:bold;color:#fff">beans</div>
<svg class="a" style="left:66px;top:311px" width="8" height="8" viewBox="0 0 8 8"><path d="M1 1L7 7M7 1L1 7" stroke="#fff" stroke-width="1.1"/></svg>

<!-- info card -->
<div class="a" style="left:360px;top:160px;width:341px;height:169px;background:#f4f5f9;border-right:3px solid #1e6e4a;border-bottom:3px solid #1e6e4a;border-radius:3px 4px 5px 4px"></div>
<div class="t lbl" style="left:370px;top:176px">Knowledge base</div>
<div class="t" style="left:370px;top:188px;font-size:10.4px;color:#44444f">Coffee</div>
<div class="t lbl" style="left:370px;top:213px">Language</div>
<div class="t" style="left:370px;top:226px;font-size:10.3px;letter-spacing:-0.05px;color:#44444f">English United States (en-US)</div>
<div class="t lbl" style="left:370px;top:252px">Date Created</div>
<div class="t" style="left:370px;top:264px;font-size:10.3px;letter-spacing:-0.14px;color:#44444f">Sep 24, 2025, 08:40:25 AM</div>
<div class="t lbl" style="left:370px;top:287px">Date Modified</div>
<div class="t" style="left:370px;top:300px;font-size:10.3px;letter-spacing:-0.14px;color:#44444f">Sep 24, 2025, 08:40:27 AM</div>

<div class="t lbl" style="left:561px;top:176px">Visibility</div>
<div class="a" style="left:562px;top:189px;width:23px;height:11px;border-radius:6px;background:#23409a"></div>
<div class="a" style="left:575px;top:190px;width:9px;height:9px;border-radius:50%;background:#fff"></div>
<svg class="a" style="left:576px;top:191px" width="7" height="7" viewBox="0 0 7 7"><path d="M1.5 3.6L3 5L5.5 2" fill="none" stroke="#23409a" stroke-width="0.8"/></svg>
<div class="t" style="left:591px;top:190px;font-size:9.5px;color:#44444f">On</div>
<div class="t lbl" style="left:561px;top:213px">Feedback</div>
<svg class="a" style="left:605.8px;top:212.8px" width="8.2" height="8.2" viewBox="0 0 8.2 8.2"><circle cx="4.1" cy="4.1" r="3.65" fill="none" stroke="#3a3a4a" stroke-width="0.9"/><path d="M4.1 3.50V6.23" stroke="#3a3a4a" stroke-width="0.9"/><circle cx="4.1" cy="2.30" r="0.54" fill="#3a3a4a"/></svg>
<div class="a" style="left:560px;top:223px;width:30px;height:17px;border-radius:9px;background:#d3efe5"></div>
<div class="t" style="left:568px;top:228px;font-size:8.5px;font-weight:bold;color:#3a3a44">--%</div>
<div class="t lbl" style="left:561px;top:252px">Created By</div>
<div class="a" style="left:549px;top:263px;width:80px;height:18px;background:#e5e6eb;filter:blur(2.5px)"></div>
<div class="t lbl" style="left:561px;top:287px">Status</div>
<div class="t" style="left:561px;top:300px;font-size:10.4px;color:#2a7a6c">Published</div>

<!-- Card 2 -->
<div class="card" style="left:11px;top:360px;width:705px;height:300px"></div>
<div class="t" style="left:28px;top:377px;font-size:14px;letter-spacing:-0.17px;color:#3a3a44">Content for the Answer</div>
<svg class="a" style="left:169.8px;top:379.2px" width="10" height="10" viewBox="0 0 10 10"><circle cx="5.0" cy="5.0" r="4.50" fill="none" stroke="#3a3a4a" stroke-width="1"/><path d="M5.0 4.40V7.60" stroke="#3a3a4a" stroke-width="1"/><circle cx="5.0" cy="2.80" r="0.60" fill="#3a3a4a"/></svg>
<div class="a" style="left:135px;top:399.5px;width:562px;height:28.5px;background:#f3f4f8;border-top-left-radius:3px"></div>
<div class="a" style="left:28px;top:427px;width:107px;height:1px;background:#4f5e98"></div><div class="a" style="left:28px;top:428px;width:107px;height:1px;background:#c5cbe0"></div>
<div class="t" style="left:37px;top:409px;font-size:9px;color:#3a3a44">Default</div>
<div class="a" style="left:120px;top:408px;width:2px;height:2px;background:#3a4c98;border-radius:50%"></div>
<div class="a" style="left:120px;top:411.5px;width:2px;height:2px;background:#3a4c98;border-radius:50%"></div>
<div class="a" style="left:120px;top:415px;width:2px;height:2px;background:#3a4c98;border-radius:50%"></div>
<svg class="a" style="left:145px;top:407px" width="10" height="10" viewBox="0 0 10 10"><path d="M5 1V9M1 5H9" stroke="#3a4c98" stroke-width="1.2"/></svg>

<!-- editor -->
<div class="a" style="left:28px;top:428px;width:669px;height:230px;border-left:1px solid #eeeff3;border-right:1px solid #eeeff3"></div>
<div class="a" style="left:38px;top:438px;width:91px;height:20px;background:#f1f2f6;border-radius:2px"></div>
<div class="t" style="left:43px;top:444px;font-size:9.7px;color:#3a3a44">Paragraph</div>
<div class="a" style="left:132px;top:438px;width:92px;height:20px;background:#f1f2f6;border-radius:2px"></div>
<div class="t" style="left:138px;top:444px;font-size:10px;color:#3a3a44">Medium</div>
<!-- font color -->
<svg class="a" style="left:0;top:0" width="1024" height="633" viewBox="0 0 1024 633">
<g fill="none" stroke-linecap="round" stroke-linejoin="round">
<path d="M250.8 445.6L254.3 449.2L257.8 445.6M286.8 445.6L290.3 449.2L293.8 445.6M482 445.6L485.5 449.2L489 445.6M518 445.6L521.5 449.2L525 445.6M639 446L642.2 449.2L645.4 446M212.3 445.9L215.8 449.5L219.3 445.9M117.3 445.9L120.8 449.5L124.3 445.9" stroke="#7a7f96" stroke-width="0.9"/>
<path d="M234 450.6L236.2 445Q237.3 443.4 238.4 445L240.6 450.6M235.2 448.4H239.4" stroke="#2f3348" stroke-width="1.3" stroke-linecap="butt"/>
<path d="M231 453.2H243.6M266.2 453.2H279" stroke="#000" stroke-width="2" stroke-linecap="butt"/>
<path d="M267.8 450.5L268.6 447.6L274.6 441.8Q275.6 440.9 276.6 441.8L277.6 442.8Q278.5 443.8 277.6 444.8L271.6 450.6Z" fill="#2f3348" stroke="none"/>
<path d="M272.2 444.6L275 447.4" stroke="#fff" stroke-width="0.7"/>
<path d="M322 442.6H327.2Q330.2 442.6 330.2 445.2Q330.2 447.8 327.2 447.8H323.6M323.6 442.6V453.4M322 453.4H328Q331.4 453.4 331.4 450.6Q331.4 447.8 328 447.8" stroke="#2f3348" stroke-width="1.3" stroke-linecap="butt"/>
<path d="M349.5 442.6H356M346 453.4H352.5M353.2 442.6L349.2 453.4" stroke="#2f3348" stroke-width="1.3" stroke-linecap="butt"/>
<path d="M370.6 442.6H374.2M378.4 442.6H382M372.3 442.6V447Q372.3 450.4 376.3 450.4Q380.3 450.4 380.3 447V442.6M370.4 453.5H382.2" stroke="#2f3348" stroke-width="1.3" stroke-linecap="butt"/>
<path d="M393.8 447.8H406.8M404.2 443.4Q402.8 442.3 400 442.3Q396.3 442.3 396.3 444.8Q396.3 446.2 397.6 447M402 448.6Q404.5 449.5 404.5 451.3Q404.5 453.8 400.6 453.8Q397.8 453.8 396.4 452.5" stroke="#2f3348" stroke-width="1.3" stroke-linecap="butt"/>
<path d="M437 442.4H443.6M437 446.1H448.6M437 449.7H443.6M437 453.3H448.6" stroke="#3a3e55" stroke-width="1.2" stroke-linecap="butt"/>
<path d="M465.8 443.6H474.6M465.8 447.8H474.6M465.8 452.6H474.6" stroke="#3a3e55" stroke-width="1.2"/>
<path d="M503 444H510M503 447.8H510M503 451.8H510" stroke="#3a3e55" stroke-width="1.2"/>
</g>
<g fill="#2f3348">
<circle cx="462.4" cy="443.6" r="0.8"/><circle cx="462.4" cy="447.8" r="0.8"/><circle cx="462.4" cy="452.6" r="0.8"/>
</g>
<text x="497.6" y="447.4" font-size="5.6" font-weight="bold" fill="#2f3348" font-family="Liberation Sans">1</text>
<text x="497.4" y="453.6" font-size="5.6" font-weight="bold" fill="#2f3348" font-family="Liberation Sans">2</text>
<rect x="550.7" y="442.2" width="12.8" height="11.8" rx="1.3" fill="none" stroke="#2f3348" stroke-width="1.3"/>
<path d="M551.2 453.6L555 449L556.8 450.6L559.8 446.6L563.2 451V453.6Z" fill="#2f3348"/>
<circle cx="554.2" cy="445.6" r="1" fill="#2f3348"/>
<rect x="575.3" y="442" width="13.8" height="12.3" rx="1.6" fill="#111"/>
<rect x="579" y="443.3" width="6.4" height="4.2" rx="0.8" fill="#fff"/><rect x="579" y="449" width="6.4" height="4.2" rx="0.8" fill="#fff"/>
<circle cx="577.1" cy="444.3" r="0.75" fill="#fff"/><circle cx="577.1" cy="448.2" r="0.75" fill="#fff"/><circle cx="577.1" cy="452" r="0.75" fill="#fff"/>
<circle cx="587.3" cy="444.3" r="0.75" fill="#fff"/><circle cx="587.3" cy="448.2" r="0.75" fill="#fff"/><circle cx="587.3" cy="452" r="0.75" fill="#fff"/>
<path d="M603.8 450H602.9A3.15 3.15 0 0 1 602.9 443.7H605.7A3.15 3.15 0 0 1 607.8 449.2M610.2 445.9H607.4A3.15 3.15 0 0 0 607.4 452.2H610.4A3.15 3.15 0 0 0 612.5 446.6" fill="none" stroke="#363a52" stroke-width="1.35" stroke-linecap="round"/>
<rect x="622.8" y="441.8" width="12.6" height="12.2" rx="1.2" fill="none" stroke="#2f3348" stroke-width="1.4"/>
<rect x="622.8" y="441.8" width="12.6" height="3.4" fill="#2f3348"/>
<path d="M629.1 444.5V453.6M623.2 449.2H635" stroke="#2f3348" stroke-width="1.3"/>
</svg>
<div class="a" style="left:306px;top:434px;width:1px;height:27px;background:#e3e4ea"></div>
<div class="a" style="left:421px;top:434px;width:1px;height:27px;background:#e3e4ea"></div>
<div class="a" style="left:536px;top:434px;width:1px;height:27px;background:#e3e4ea"></div>
<div class="a" style="left:38px;top:461px;width:652px;height:1px;background:#e6e7ec"></div>
<div class="a" style="left:29px;top:466px;width:667px;height:5px;background:linear-gradient(#f2f3f6,#fafafc)"></div>

<div class="a" style="left:40px;top:479px;font-size:11px;line-height:16px;color:#2a2a33;width:700px;white-space:nowrap"><span class="ln2" style="letter-spacing:0.063px">Most roasters have specialized names for their favored roasts and there is very little industry standardization. This can cause some</span><br><span class="ln2"><span style="letter-spacing:0.15px">confusion when you're buying, but in general, roasts fall into one of four color categories — </span><b style="letter-spacing:0.2px">light, medium, medium-dark and</b></span></div>

<!-- big image -->
<div class="a" style="left:79px;top:516px;width:283px;height:120px">
<div class="t" style="left:17px;top:5px;font-family:'Liberation Serif';font-size:7.5px;color:#2a2a2a;-webkit-text-stroke:0.1px #2a2a2a">Light Roast</div>
<div class="t" style="left:82px;top:5px;font-family:'Liberation Serif';font-size:7.5px;color:#2a2a2a;-webkit-text-stroke:0.1px #2a2a2a">Medium Roast</div>
<div class="t" style="left:144px;top:5px;font-family:'Liberation Serif';font-size:7.5px;color:#2a2a2a;-webkit-text-stroke:0.1px #2a2a2a">Medium Dark Roast</div>
<div class="t" style="left:225px;top:5px;font-family:'Liberation Serif';font-size:7.5px;color:#2a2a2a;-webkit-text-stroke:0.1px #2a2a2a">Dark Roast</div>
<svg class="a" style="left:0;top:19px" width="283" height="133" viewBox="0 0 179 84"><use href="#beans"/></svg>
</div>

<!-- right panel -->
<div class="card" style="left:733px;top:52px;width:300px;height:508px;border-radius:7px"></div>
<div class="a" style="left:743px;top:60px;width:272px;height:495px;border:2px solid #e8161b;box-shadow:0 0 0 0.7px rgba(232,22,27,0.45)"></div>
<div class="a" style="left:751px;top:70px;width:259px;height:473px;border:1px solid #cfd5e3;border-radius:7px;background:#fff;overflow:hidden">
  <div class="a" style="left:0;top:0;width:259px;height:44px;background:#d5dff5"></div>
</div>
<div class="t" style="left:762px;top:86.5px;font-size:12.8px;color:#2b2b33;-webkit-text-stroke:0.35px #2b2b33">Test Articles</div>
<svg class="a" style="left:0;top:0" width="1024" height="633" viewBox="0 0 1024 633"><path d="M951.6 88.4H961.8L957.8 93.6L956.9 96.4Q956.6 97.1 956.2 96.4L955.5 93.6Z" fill="none" stroke="#24388f" stroke-width="1.15" stroke-linejoin="round"/></svg>
<div class="t" style="left:968px;top:89px;font-size:9px;font-weight:bold;color:#2f4596">Filter</div>

<div class="a" style="left:888px;top:127px;width:116px;height:25px;border:1px solid #c6cad6;border-radius:8px;background:#fff"></div>
<div class="t" style="left:900px;top:135px;font-size:9px;color:#44444f">picture of coffee roasts</div>

<div class="a" style="left:757px;top:158px;width:222px;height:269px;border:1px solid #d2d6e1;border-radius:7px;background:#fff"></div>
<div class="a" style="left:943px;top:168px;width:6px;height:6px;border-radius:50%;background:#176447"></div>
<div class="t" style="left:950px;top:167px;font-size:9px;color:#44444f">92%</div>
<div class="a" style="left:769px;top:181px;width:230px;white-space:nowrap;font-size:9px;line-height:12.8px;color:#4a4a55"><span class="ln">Most roasters have specialized names for their</span><br><span class="ln">favored roasts and there is very little industry</span><br><span class="ln">standardization. This can cause some confusion</span><br><span class="ln">when you're buying, but in general, roasts fall</span><br><span class="ln">into one of four color categories — <b>light,</b></span><br><span class="ln"><b>medium, medium-dark and dark</b>.</span></div>
<div class="a" style="left:777px;top:262px;width:180px;height:130px">
<div class="t" style="left:10px;top:2px;font-family:'Liberation Serif';font-size:4.8px;color:#333">Light Roast</div>
<div class="t" style="left:52px;top:2px;font-family:'Liberation Serif';font-size:4.8px;color:#333">Medium Roast</div>
<div class="t" style="left:91px;top:2px;font-family:'Liberation Serif';font-size:4.8px;color:#333">Medium Dark Roast</div>
<div class="t" style="left:143px;top:2px;font-family:'Liberation Serif';font-size:4.8px;color:#333">Dark Roast</div>
<svg class="a" style="left:0;top:11px" width="179" height="84" viewBox="0 0 179 84"><use href="#beans"/></svg>
<div class="a" style="left:0;top:101px;width:44px;text-align:center;font-family:'Liberation Serif';font-size:4.8px;line-height:6.5px;color:#3a3a3a">internal<br>temperature<br>of around 356°F<br>(180°C)</div>
<div class="a" style="left:45px;top:101px;width:44px;text-align:center;font-family:'Liberation Serif';font-size:4.8px;line-height:6.5px;color:#3a3a3a">internal<br>temperature of<br>around 410°F<br>(210°C)</div>
<div class="a" style="left:90px;top:101px;width:44px;text-align:center;font-family:'Liberation Serif';font-size:4.8px;line-height:6.5px;color:#3a3a3a">internal<br>temperature of<br>around 437°F<br>(225°C)</div>
<div class="a" style="left:134px;top:101px;width:44px;text-align:center;font-family:'Liberation Serif';font-size:4.8px;line-height:6.5px;color:#3a3a3a">internal<br>temperature of<br>around 464°F<br>(240°C)</div>
</div>
<div class="t" style="left:768.8px;top:411.4px;font-size:8.5px;color:#4a62b0;text-decoration:underline">Read Less</div>

<div class="a" style="left:751px;top:502px;width:259px;height:1px;background:#cfd5e3"></div>
<div class="t" style="left:764px;top:519px;font-size:8.8px;color:#7a7a85">Type message here and press return key</div>
<svg class="a" style="left:0.3px;top:0.6px" width="1024" height="633" viewBox="0 0 1024 633"><path d="M985.6 519.6A5 5 0 1 1 986.6 526.3" fill="none" stroke="#1a1a22" stroke-width="1.4" stroke-linecap="round"/><path d="M984.2 516.6V521.6H989Z" fill="#1a1a22" stroke="#1a1a22" stroke-width="0.6" stroke-linejoin="round"/></svg>

<!-- scrollbars -->
<div class="a" style="left:1017px;top:2px;width:7px;height:619px;background:#f1f1f1"></div>
<div class="a" style="left:1017px;top:8px;width:9px;height:362px;background:#878787;border-radius:4px"></div>
<div class="a" style="left:0;top:621px;width:1017px;height:12px;background:#f1f1f1"></div><div class="a" style="left:1017px;top:621px;width:7px;height:12px;background:#fff"></div>
<div class="a" style="left:0;top:621px;width:1011px;height:13px;background:#878787;border-radius:4px"></div>
</body></html>
